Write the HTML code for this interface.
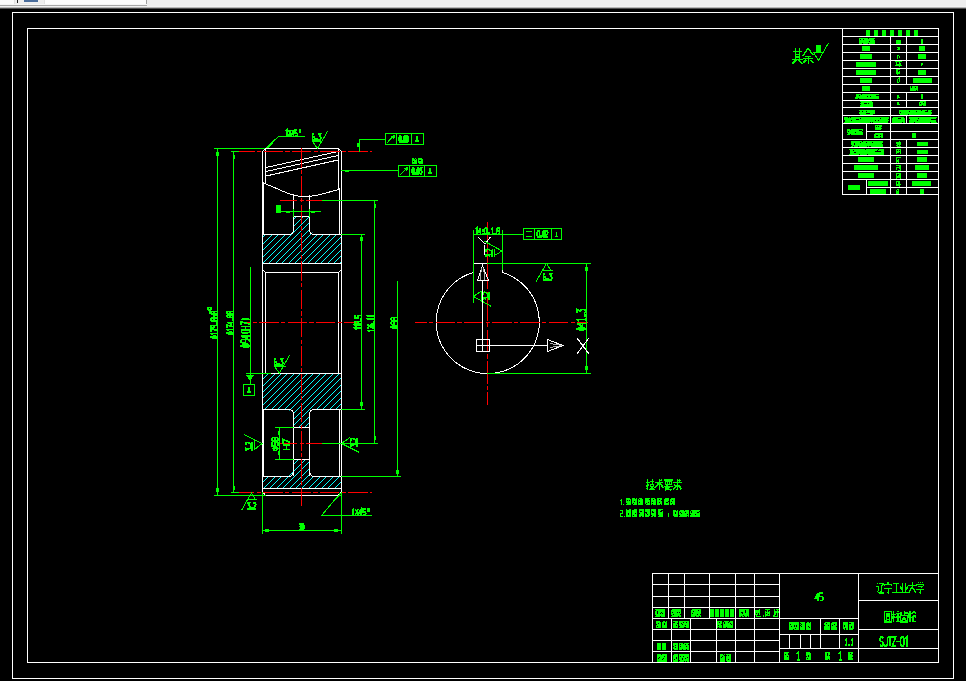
<!DOCTYPE html>
<html><head><meta charset="utf-8"><style>
html,body{margin:0;padding:0;background:#000;width:966px;height:681px;overflow:hidden;font-family:"Liberation Sans",sans-serif}
#top{position:absolute;left:0;top:0;width:966px;height:9px;background:#eeeeee}
svg{position:absolute;left:0;top:0}
</style></head><body>
<div id="top"></div>
<svg width="966" height="681" viewBox="0 0 966 681" shape-rendering="crispEdges" stroke-width="1">
<rect x="0" y="0" width="966" height="6" fill="#eeeeee"/>
<rect x="0" y="0" width="14" height="4" fill="#fcfcfc"/>
<rect x="14" y="0" width="31" height="4" fill="#efefef"/>
<rect x="14" y="0" width="1" height="4" fill="#e2e2e2"/>
<rect x="44" y="0" width="1" height="4" fill="#e2e2e2"/>
<rect x="17" y="0" width="1" height="3" fill="#222"/>
<rect x="24" y="0" width="14" height="2" fill="#4a6d9c"/>
<rect x="45" y="0" width="101" height="4" fill="#fdfdfd"/>
<rect x="146" y="0" width="1" height="5" fill="#a0a0a0"/>
<rect x="0" y="4" width="147" height="1" fill="#f6f6f6"/>
<rect x="0" y="5" width="147" height="1" fill="#a8a8a8"/>
<rect x="0" y="6" width="966" height="1" fill="#f2f2f2"/>
<rect x="0" y="7" width="966" height="1" fill="#b8b8b8"/>
<rect x="0" y="8" width="966" height="1" fill="#505050"/>
<rect x="0" y="9" width="966" height="672" fill="#000"/>

<rect x="12.5" y="12.5" width="941" height="666" fill="none" stroke="#ffffff"/>
<rect x="27.5" y="28.5" width="911" height="634" fill="none" stroke="#ffffff"/>
<clipPath id="hc0"><polygon points="262,234 288,234 293,229 293,216 309,216 309,229 314,234 341,234 341,263 262,263"/></clipPath>
<path d="M262,219v-1h1v-1h1v-1h1v1h-1v1h-1v1h-1zM262,225v-1h1v-1h1v-1h1v-1h1v-1h1v-1h1v-1h1v-1h1v-1h1v1h-1v1h-1v1h-1v1h-1v1h-1v1h-1v1h-1v1h-1v1h-1zM262,232v-1h1v-1h1v-1h1v-1h1v-1h1v-1h1v-1h1v-1h1v-1h1v-1h1v-1h1v-1h1v-1h1v-1h1v-1h1v-1h1v1h-1v1h-1v1h-1v1h-1v1h-1v1h-1v1h-1v1h-1v1h-1v1h-1v1h-1v1h-1v1h-1v1h-1v1h-1v1h-1zM262,238v-1h1v-1h1v-1h1v-1h1v-1h1v-1h1v-1h1v-1h1v-1h1v-1h1v-1h1v-1h1v-1h1v-1h1v-1h1v-1h1v-1h1v-1h1v-1h1v-1h1v-1h1v-1h1v1h-1v1h-1v1h-1v1h-1v1h-1v1h-1v1h-1v1h-1v1h-1v1h-1v1h-1v1h-1v1h-1v1h-1v1h-1v1h-1v1h-1v1h-1v1h-1v1h-1v1h-1v1h-1zM262,245v-1h1v-1h1v-1h1v-1h1v-1h1v-1h1v-1h1v-1h1v-1h1v-1h1v-1h1v-1h1v-1h1v-1h1v-1h1v-1h1v-1h1v-1h1v-1h1v-1h1v-1h1v-1h1v-1h1v-1h1v-1h1v-1h1v-1h1v-1h1v-1h1v1h-1v1h-1v1h-1v1h-1v1h-1v1h-1v1h-1v1h-1v1h-1v1h-1v1h-1v1h-1v1h-1v1h-1v1h-1v1h-1v1h-1v1h-1v1h-1v1h-1v1h-1v1h-1v1h-1v1h-1v1h-1v1h-1v1h-1v1h-1v1h-1zM262,251v-1h1v-1h1v-1h1v-1h1v-1h1v-1h1v-1h1v-1h1v-1h1v-1h1v-1h1v-1h1v-1h1v-1h1v-1h1v-1h1v-1h1v-1h1v-1h1v-1h1v-1h1v-1h1v-1h1v-1h1v-1h1v-1h1v-1h1v-1h1v-1h1v-1h1v-1h1v-1h1v-1h1v-1h1v-1h1v1h-1v1h-1v1h-1v1h-1v1h-1v1h-1v1h-1v1h-1v1h-1v1h-1v1h-1v1h-1v1h-1v1h-1v1h-1v1h-1v1h-1v1h-1v1h-1v1h-1v1h-1v1h-1v1h-1v1h-1v1h-1v1h-1v1h-1v1h-1v1h-1v1h-1v1h-1v1h-1v1h-1v1h-1v1h-1zM262,258v-1h1v-1h1v-1h1v-1h1v-1h1v-1h1v-1h1v-1h1v-1h1v-1h1v-1h1v-1h1v-1h1v-1h1v-1h1v-1h1v-1h1v-1h1v-1h1v-1h1v-1h1v-1h1v-1h1v-1h1v-1h1v-1h1v-1h1v-1h1v-1h1v-1h1v-1h1v-1h1v-1h1v-1h1v-1h1v-1h1v-1h1v-1h1v-1h1v-1h1v-1h1v-1h1v1h-1v1h-1v1h-1v1h-1v1h-1v1h-1v1h-1v1h-1v1h-1v1h-1v1h-1v1h-1v1h-1v1h-1v1h-1v1h-1v1h-1v1h-1v1h-1v1h-1v1h-1v1h-1v1h-1v1h-1v1h-1v1h-1v1h-1v1h-1v1h-1v1h-1v1h-1v1h-1v1h-1v1h-1v1h-1v1h-1v1h-1v1h-1v1h-1v1h-1v1h-1v1h-1zM263,263v-1h1v-1h1v-1h1v-1h1v-1h1v-1h1v-1h1v-1h1v-1h1v-1h1v-1h1v-1h1v-1h1v-1h1v-1h1v-1h1v-1h1v-1h1v-1h1v-1h1v-1h1v-1h1v-1h1v-1h1v-1h1v-1h1v-1h1v-1h1v-1h1v-1h1v-1h1v-1h1v-1h1v-1h1v-1h1v-1h1v-1h1v-1h1v-1h1v-1h1v-1h1v-1h1v-1h1v-1h1v-1h1v-1h1v-1h1v1h-1v1h-1v1h-1v1h-1v1h-1v1h-1v1h-1v1h-1v1h-1v1h-1v1h-1v1h-1v1h-1v1h-1v1h-1v1h-1v1h-1v1h-1v1h-1v1h-1v1h-1v1h-1v1h-1v1h-1v1h-1v1h-1v1h-1v1h-1v1h-1v1h-1v1h-1v1h-1v1h-1v1h-1v1h-1v1h-1v1h-1v1h-1v1h-1v1h-1v1h-1v1h-1v1h-1v1h-1v1h-1v1h-1v1h-1zM269,263v-1h1v-1h1v-1h1v-1h1v-1h1v-1h1v-1h1v-1h1v-1h1v-1h1v-1h1v-1h1v-1h1v-1h1v-1h1v-1h1v-1h1v-1h1v-1h1v-1h1v-1h1v-1h1v-1h1v-1h1v-1h1v-1h1v-1h1v-1h1v-1h1v-1h1v-1h1v-1h1v-1h1v-1h1v-1h1v-1h1v-1h1v-1h1v-1h1v-1h1v-1h1v-1h1v-1h1v-1h1v-1h1v-1h1v-1h1v1h-1v1h-1v1h-1v1h-1v1h-1v1h-1v1h-1v1h-1v1h-1v1h-1v1h-1v1h-1v1h-1v1h-1v1h-1v1h-1v1h-1v1h-1v1h-1v1h-1v1h-1v1h-1v1h-1v1h-1v1h-1v1h-1v1h-1v1h-1v1h-1v1h-1v1h-1v1h-1v1h-1v1h-1v1h-1v1h-1v1h-1v1h-1v1h-1v1h-1v1h-1v1h-1v1h-1v1h-1v1h-1v1h-1v1h-1zM276,263v-1h1v-1h1v-1h1v-1h1v-1h1v-1h1v-1h1v-1h1v-1h1v-1h1v-1h1v-1h1v-1h1v-1h1v-1h1v-1h1v-1h1v-1h1v-1h1v-1h1v-1h1v-1h1v-1h1v-1h1v-1h1v-1h1v-1h1v-1h1v-1h1v-1h1v-1h1v-1h1v-1h1v-1h1v-1h1v-1h1v-1h1v-1h1v-1h1v-1h1v-1h1v-1h1v-1h1v-1h1v-1h1v-1h1v-1h1v1h-1v1h-1v1h-1v1h-1v1h-1v1h-1v1h-1v1h-1v1h-1v1h-1v1h-1v1h-1v1h-1v1h-1v1h-1v1h-1v1h-1v1h-1v1h-1v1h-1v1h-1v1h-1v1h-1v1h-1v1h-1v1h-1v1h-1v1h-1v1h-1v1h-1v1h-1v1h-1v1h-1v1h-1v1h-1v1h-1v1h-1v1h-1v1h-1v1h-1v1h-1v1h-1v1h-1v1h-1v1h-1v1h-1v1h-1zM282,263v-1h1v-1h1v-1h1v-1h1v-1h1v-1h1v-1h1v-1h1v-1h1v-1h1v-1h1v-1h1v-1h1v-1h1v-1h1v-1h1v-1h1v-1h1v-1h1v-1h1v-1h1v-1h1v-1h1v-1h1v-1h1v-1h1v-1h1v-1h1v-1h1v-1h1v-1h1v-1h1v-1h1v-1h1v-1h1v-1h1v-1h1v-1h1v-1h1v-1h1v-1h1v-1h1v-1h1v-1h1v-1h1v-1h1v-1h1v1h-1v1h-1v1h-1v1h-1v1h-1v1h-1v1h-1v1h-1v1h-1v1h-1v1h-1v1h-1v1h-1v1h-1v1h-1v1h-1v1h-1v1h-1v1h-1v1h-1v1h-1v1h-1v1h-1v1h-1v1h-1v1h-1v1h-1v1h-1v1h-1v1h-1v1h-1v1h-1v1h-1v1h-1v1h-1v1h-1v1h-1v1h-1v1h-1v1h-1v1h-1v1h-1v1h-1v1h-1v1h-1v1h-1v1h-1zM289,263v-1h1v-1h1v-1h1v-1h1v-1h1v-1h1v-1h1v-1h1v-1h1v-1h1v-1h1v-1h1v-1h1v-1h1v-1h1v-1h1v-1h1v-1h1v-1h1v-1h1v-1h1v-1h1v-1h1v-1h1v-1h1v-1h1v-1h1v-1h1v-1h1v-1h1v-1h1v-1h1v-1h1v-1h1v-1h1v-1h1v-1h1v-1h1v-1h1v-1h1v-1h1v-1h1v-1h1v-1h1v-1h1v-1h1v-1h1v1h-1v1h-1v1h-1v1h-1v1h-1v1h-1v1h-1v1h-1v1h-1v1h-1v1h-1v1h-1v1h-1v1h-1v1h-1v1h-1v1h-1v1h-1v1h-1v1h-1v1h-1v1h-1v1h-1v1h-1v1h-1v1h-1v1h-1v1h-1v1h-1v1h-1v1h-1v1h-1v1h-1v1h-1v1h-1v1h-1v1h-1v1h-1v1h-1v1h-1v1h-1v1h-1v1h-1v1h-1v1h-1v1h-1v1h-1zM295,263v-1h1v-1h1v-1h1v-1h1v-1h1v-1h1v-1h1v-1h1v-1h1v-1h1v-1h1v-1h1v-1h1v-1h1v-1h1v-1h1v-1h1v-1h1v-1h1v-1h1v-1h1v-1h1v-1h1v-1h1v-1h1v-1h1v-1h1v-1h1v-1h1v-1h1v-1h1v-1h1v-1h1v-1h1v-1h1v-1h1v-1h1v-1h1v-1h1v-1h1v-1h1v-1h1v-1h1v-1h1v-1h1v-1h1v1h-1v1h-1v1h-1v1h-1v1h-1v1h-1v1h-1v1h-1v1h-1v1h-1v1h-1v1h-1v1h-1v1h-1v1h-1v1h-1v1h-1v1h-1v1h-1v1h-1v1h-1v1h-1v1h-1v1h-1v1h-1v1h-1v1h-1v1h-1v1h-1v1h-1v1h-1v1h-1v1h-1v1h-1v1h-1v1h-1v1h-1v1h-1v1h-1v1h-1v1h-1v1h-1v1h-1v1h-1v1h-1v1h-1zM302,263v-1h1v-1h1v-1h1v-1h1v-1h1v-1h1v-1h1v-1h1v-1h1v-1h1v-1h1v-1h1v-1h1v-1h1v-1h1v-1h1v-1h1v-1h1v-1h1v-1h1v-1h1v-1h1v-1h1v-1h1v-1h1v-1h1v-1h1v-1h1v-1h1v-1h1v-1h1v-1h1v-1h1v-1h1v-1h1v-1h1v-1h1v-1h1v-1h1v1h-1v1h-1v1h-1v1h-1v1h-1v1h-1v1h-1v1h-1v1h-1v1h-1v1h-1v1h-1v1h-1v1h-1v1h-1v1h-1v1h-1v1h-1v1h-1v1h-1v1h-1v1h-1v1h-1v1h-1v1h-1v1h-1v1h-1v1h-1v1h-1v1h-1v1h-1v1h-1v1h-1v1h-1v1h-1v1h-1v1h-1v1h-1v1h-1zM308,263v-1h1v-1h1v-1h1v-1h1v-1h1v-1h1v-1h1v-1h1v-1h1v-1h1v-1h1v-1h1v-1h1v-1h1v-1h1v-1h1v-1h1v-1h1v-1h1v-1h1v-1h1v-1h1v-1h1v-1h1v-1h1v-1h1v-1h1v-1h1v-1h1v-1h1v-1h1v-1h1v-1h1v1h-1v1h-1v1h-1v1h-1v1h-1v1h-1v1h-1v1h-1v1h-1v1h-1v1h-1v1h-1v1h-1v1h-1v1h-1v1h-1v1h-1v1h-1v1h-1v1h-1v1h-1v1h-1v1h-1v1h-1v1h-1v1h-1v1h-1v1h-1v1h-1v1h-1v1h-1v1h-1v1h-1zM315,263v-1h1v-1h1v-1h1v-1h1v-1h1v-1h1v-1h1v-1h1v-1h1v-1h1v-1h1v-1h1v-1h1v-1h1v-1h1v-1h1v-1h1v-1h1v-1h1v-1h1v-1h1v-1h1v-1h1v-1h1v-1h1v-1h1v1h-1v1h-1v1h-1v1h-1v1h-1v1h-1v1h-1v1h-1v1h-1v1h-1v1h-1v1h-1v1h-1v1h-1v1h-1v1h-1v1h-1v1h-1v1h-1v1h-1v1h-1v1h-1v1h-1v1h-1v1h-1v1h-1zM321,263v-1h1v-1h1v-1h1v-1h1v-1h1v-1h1v-1h1v-1h1v-1h1v-1h1v-1h1v-1h1v-1h1v-1h1v-1h1v-1h1v-1h1v-1h1v-1h1v-1h1v1h-1v1h-1v1h-1v1h-1v1h-1v1h-1v1h-1v1h-1v1h-1v1h-1v1h-1v1h-1v1h-1v1h-1v1h-1v1h-1v1h-1v1h-1v1h-1v1h-1zM328,263v-1h1v-1h1v-1h1v-1h1v-1h1v-1h1v-1h1v-1h1v-1h1v-1h1v-1h1v-1h1v-1h1v1h-1v1h-1v1h-1v1h-1v1h-1v1h-1v1h-1v1h-1v1h-1v1h-1v1h-1v1h-1v1h-1zM334,263v-1h1v-1h1v-1h1v-1h1v-1h1v-1h1v-1h1v1h-1v1h-1v1h-1v1h-1v1h-1v1h-1v1h-1zM340,263v-1h1v1h-1z" fill="#00ffff" clip-path="url(#hc0)" stroke="none"/>
<clipPath id="hc1"><polygon points="262,373 341,373 341,409 314,409 309,414 309,427 293,427 293,414 288,409 262,409"/></clipPath>
<path d="M262,374v-1h1v1h-1zM262,380v-1h1v-1h1v-1h1v-1h1v-1h1v-1h1v-1h1v1h-1v1h-1v1h-1v1h-1v1h-1v1h-1v1h-1zM262,387v-1h1v-1h1v-1h1v-1h1v-1h1v-1h1v-1h1v-1h1v-1h1v-1h1v-1h1v-1h1v-1h1v-1h1v1h-1v1h-1v1h-1v1h-1v1h-1v1h-1v1h-1v1h-1v1h-1v1h-1v1h-1v1h-1v1h-1v1h-1zM262,393v-1h1v-1h1v-1h1v-1h1v-1h1v-1h1v-1h1v-1h1v-1h1v-1h1v-1h1v-1h1v-1h1v-1h1v-1h1v-1h1v-1h1v-1h1v-1h1v-1h1v1h-1v1h-1v1h-1v1h-1v1h-1v1h-1v1h-1v1h-1v1h-1v1h-1v1h-1v1h-1v1h-1v1h-1v1h-1v1h-1v1h-1v1h-1v1h-1v1h-1zM262,399v-1h1v-1h1v-1h1v-1h1v-1h1v-1h1v-1h1v-1h1v-1h1v-1h1v-1h1v-1h1v-1h1v-1h1v-1h1v-1h1v-1h1v-1h1v-1h1v-1h1v-1h1v-1h1v-1h1v-1h1v-1h1v-1h1v1h-1v1h-1v1h-1v1h-1v1h-1v1h-1v1h-1v1h-1v1h-1v1h-1v1h-1v1h-1v1h-1v1h-1v1h-1v1h-1v1h-1v1h-1v1h-1v1h-1v1h-1v1h-1v1h-1v1h-1v1h-1v1h-1zM262,406v-1h1v-1h1v-1h1v-1h1v-1h1v-1h1v-1h1v-1h1v-1h1v-1h1v-1h1v-1h1v-1h1v-1h1v-1h1v-1h1v-1h1v-1h1v-1h1v-1h1v-1h1v-1h1v-1h1v-1h1v-1h1v-1h1v-1h1v-1h1v-1h1v-1h1v-1h1v-1h1v-1h1v1h-1v1h-1v1h-1v1h-1v1h-1v1h-1v1h-1v1h-1v1h-1v1h-1v1h-1v1h-1v1h-1v1h-1v1h-1v1h-1v1h-1v1h-1v1h-1v1h-1v1h-1v1h-1v1h-1v1h-1v1h-1v1h-1v1h-1v1h-1v1h-1v1h-1v1h-1v1h-1v1h-1zM262,412v-1h1v-1h1v-1h1v-1h1v-1h1v-1h1v-1h1v-1h1v-1h1v-1h1v-1h1v-1h1v-1h1v-1h1v-1h1v-1h1v-1h1v-1h1v-1h1v-1h1v-1h1v-1h1v-1h1v-1h1v-1h1v-1h1v-1h1v-1h1v-1h1v-1h1v-1h1v-1h1v-1h1v-1h1v-1h1v-1h1v-1h1v-1h1v-1h1v1h-1v1h-1v1h-1v1h-1v1h-1v1h-1v1h-1v1h-1v1h-1v1h-1v1h-1v1h-1v1h-1v1h-1v1h-1v1h-1v1h-1v1h-1v1h-1v1h-1v1h-1v1h-1v1h-1v1h-1v1h-1v1h-1v1h-1v1h-1v1h-1v1h-1v1h-1v1h-1v1h-1v1h-1v1h-1v1h-1v1h-1v1h-1v1h-1zM262,419v-1h1v-1h1v-1h1v-1h1v-1h1v-1h1v-1h1v-1h1v-1h1v-1h1v-1h1v-1h1v-1h1v-1h1v-1h1v-1h1v-1h1v-1h1v-1h1v-1h1v-1h1v-1h1v-1h1v-1h1v-1h1v-1h1v-1h1v-1h1v-1h1v-1h1v-1h1v-1h1v-1h1v-1h1v-1h1v-1h1v-1h1v-1h1v-1h1v-1h1v-1h1v-1h1v-1h1v-1h1v-1h1v-1h1v1h-1v1h-1v1h-1v1h-1v1h-1v1h-1v1h-1v1h-1v1h-1v1h-1v1h-1v1h-1v1h-1v1h-1v1h-1v1h-1v1h-1v1h-1v1h-1v1h-1v1h-1v1h-1v1h-1v1h-1v1h-1v1h-1v1h-1v1h-1v1h-1v1h-1v1h-1v1h-1v1h-1v1h-1v1h-1v1h-1v1h-1v1h-1v1h-1v1h-1v1h-1v1h-1v1h-1v1h-1v1h-1v1h-1zM262,425v-1h1v-1h1v-1h1v-1h1v-1h1v-1h1v-1h1v-1h1v-1h1v-1h1v-1h1v-1h1v-1h1v-1h1v-1h1v-1h1v-1h1v-1h1v-1h1v-1h1v-1h1v-1h1v-1h1v-1h1v-1h1v-1h1v-1h1v-1h1v-1h1v-1h1v-1h1v-1h1v-1h1v-1h1v-1h1v-1h1v-1h1v-1h1v-1h1v-1h1v-1h1v-1h1v-1h1v-1h1v-1h1v-1h1v-1h1v-1h1v-1h1v-1h1v-1h1v-1h1v1h-1v1h-1v1h-1v1h-1v1h-1v1h-1v1h-1v1h-1v1h-1v1h-1v1h-1v1h-1v1h-1v1h-1v1h-1v1h-1v1h-1v1h-1v1h-1v1h-1v1h-1v1h-1v1h-1v1h-1v1h-1v1h-1v1h-1v1h-1v1h-1v1h-1v1h-1v1h-1v1h-1v1h-1v1h-1v1h-1v1h-1v1h-1v1h-1v1h-1v1h-1v1h-1v1h-1v1h-1v1h-1v1h-1v1h-1v1h-1v1h-1v1h-1v1h-1v1h-1zM267,427v-1h1v-1h1v-1h1v-1h1v-1h1v-1h1v-1h1v-1h1v-1h1v-1h1v-1h1v-1h1v-1h1v-1h1v-1h1v-1h1v-1h1v-1h1v-1h1v-1h1v-1h1v-1h1v-1h1v-1h1v-1h1v-1h1v-1h1v-1h1v-1h1v-1h1v-1h1v-1h1v-1h1v-1h1v-1h1v-1h1v-1h1v-1h1v-1h1v-1h1v-1h1v-1h1v-1h1v-1h1v-1h1v-1h1v-1h1v-1h1v-1h1v-1h1v-1h1v-1h1v-1h1v-1h1v1h-1v1h-1v1h-1v1h-1v1h-1v1h-1v1h-1v1h-1v1h-1v1h-1v1h-1v1h-1v1h-1v1h-1v1h-1v1h-1v1h-1v1h-1v1h-1v1h-1v1h-1v1h-1v1h-1v1h-1v1h-1v1h-1v1h-1v1h-1v1h-1v1h-1v1h-1v1h-1v1h-1v1h-1v1h-1v1h-1v1h-1v1h-1v1h-1v1h-1v1h-1v1h-1v1h-1v1h-1v1h-1v1h-1v1h-1v1h-1v1h-1v1h-1v1h-1v1h-1v1h-1v1h-1zM273,427v-1h1v-1h1v-1h1v-1h1v-1h1v-1h1v-1h1v-1h1v-1h1v-1h1v-1h1v-1h1v-1h1v-1h1v-1h1v-1h1v-1h1v-1h1v-1h1v-1h1v-1h1v-1h1v-1h1v-1h1v-1h1v-1h1v-1h1v-1h1v-1h1v-1h1v-1h1v-1h1v-1h1v-1h1v-1h1v-1h1v-1h1v-1h1v-1h1v-1h1v-1h1v-1h1v-1h1v-1h1v-1h1v-1h1v-1h1v-1h1v-1h1v-1h1v-1h1v-1h1v-1h1v-1h1v1h-1v1h-1v1h-1v1h-1v1h-1v1h-1v1h-1v1h-1v1h-1v1h-1v1h-1v1h-1v1h-1v1h-1v1h-1v1h-1v1h-1v1h-1v1h-1v1h-1v1h-1v1h-1v1h-1v1h-1v1h-1v1h-1v1h-1v1h-1v1h-1v1h-1v1h-1v1h-1v1h-1v1h-1v1h-1v1h-1v1h-1v1h-1v1h-1v1h-1v1h-1v1h-1v1h-1v1h-1v1h-1v1h-1v1h-1v1h-1v1h-1v1h-1v1h-1v1h-1v1h-1v1h-1zM280,427v-1h1v-1h1v-1h1v-1h1v-1h1v-1h1v-1h1v-1h1v-1h1v-1h1v-1h1v-1h1v-1h1v-1h1v-1h1v-1h1v-1h1v-1h1v-1h1v-1h1v-1h1v-1h1v-1h1v-1h1v-1h1v-1h1v-1h1v-1h1v-1h1v-1h1v-1h1v-1h1v-1h1v-1h1v-1h1v-1h1v-1h1v-1h1v-1h1v-1h1v-1h1v-1h1v-1h1v-1h1v-1h1v-1h1v-1h1v-1h1v-1h1v-1h1v-1h1v-1h1v-1h1v-1h1v1h-1v1h-1v1h-1v1h-1v1h-1v1h-1v1h-1v1h-1v1h-1v1h-1v1h-1v1h-1v1h-1v1h-1v1h-1v1h-1v1h-1v1h-1v1h-1v1h-1v1h-1v1h-1v1h-1v1h-1v1h-1v1h-1v1h-1v1h-1v1h-1v1h-1v1h-1v1h-1v1h-1v1h-1v1h-1v1h-1v1h-1v1h-1v1h-1v1h-1v1h-1v1h-1v1h-1v1h-1v1h-1v1h-1v1h-1v1h-1v1h-1v1h-1v1h-1v1h-1v1h-1v1h-1zM286,427v-1h1v-1h1v-1h1v-1h1v-1h1v-1h1v-1h1v-1h1v-1h1v-1h1v-1h1v-1h1v-1h1v-1h1v-1h1v-1h1v-1h1v-1h1v-1h1v-1h1v-1h1v-1h1v-1h1v-1h1v-1h1v-1h1v-1h1v-1h1v-1h1v-1h1v-1h1v-1h1v-1h1v-1h1v-1h1v-1h1v-1h1v-1h1v-1h1v-1h1v-1h1v-1h1v-1h1v-1h1v-1h1v-1h1v-1h1v-1h1v-1h1v-1h1v-1h1v-1h1v-1h1v-1h1v1h-1v1h-1v1h-1v1h-1v1h-1v1h-1v1h-1v1h-1v1h-1v1h-1v1h-1v1h-1v1h-1v1h-1v1h-1v1h-1v1h-1v1h-1v1h-1v1h-1v1h-1v1h-1v1h-1v1h-1v1h-1v1h-1v1h-1v1h-1v1h-1v1h-1v1h-1v1h-1v1h-1v1h-1v1h-1v1h-1v1h-1v1h-1v1h-1v1h-1v1h-1v1h-1v1h-1v1h-1v1h-1v1h-1v1h-1v1h-1v1h-1v1h-1v1h-1v1h-1v1h-1v1h-1zM292,427v-1h1v-1h1v-1h1v-1h1v-1h1v-1h1v-1h1v-1h1v-1h1v-1h1v-1h1v-1h1v-1h1v-1h1v-1h1v-1h1v-1h1v-1h1v-1h1v-1h1v-1h1v-1h1v-1h1v-1h1v-1h1v-1h1v-1h1v-1h1v-1h1v-1h1v-1h1v-1h1v-1h1v-1h1v-1h1v-1h1v-1h1v-1h1v-1h1v-1h1v-1h1v-1h1v-1h1v-1h1v-1h1v-1h1v-1h1v-1h1v-1h1v1h-1v1h-1v1h-1v1h-1v1h-1v1h-1v1h-1v1h-1v1h-1v1h-1v1h-1v1h-1v1h-1v1h-1v1h-1v1h-1v1h-1v1h-1v1h-1v1h-1v1h-1v1h-1v1h-1v1h-1v1h-1v1h-1v1h-1v1h-1v1h-1v1h-1v1h-1v1h-1v1h-1v1h-1v1h-1v1h-1v1h-1v1h-1v1h-1v1h-1v1h-1v1h-1v1h-1v1h-1v1h-1v1h-1v1h-1v1h-1v1h-1zM299,427v-1h1v-1h1v-1h1v-1h1v-1h1v-1h1v-1h1v-1h1v-1h1v-1h1v-1h1v-1h1v-1h1v-1h1v-1h1v-1h1v-1h1v-1h1v-1h1v-1h1v-1h1v-1h1v-1h1v-1h1v-1h1v-1h1v-1h1v-1h1v-1h1v-1h1v-1h1v-1h1v-1h1v-1h1v-1h1v-1h1v-1h1v-1h1v-1h1v-1h1v-1h1v-1h1v1h-1v1h-1v1h-1v1h-1v1h-1v1h-1v1h-1v1h-1v1h-1v1h-1v1h-1v1h-1v1h-1v1h-1v1h-1v1h-1v1h-1v1h-1v1h-1v1h-1v1h-1v1h-1v1h-1v1h-1v1h-1v1h-1v1h-1v1h-1v1h-1v1h-1v1h-1v1h-1v1h-1v1h-1v1h-1v1h-1v1h-1v1h-1v1h-1v1h-1v1h-1v1h-1zM305,427v-1h1v-1h1v-1h1v-1h1v-1h1v-1h1v-1h1v-1h1v-1h1v-1h1v-1h1v-1h1v-1h1v-1h1v-1h1v-1h1v-1h1v-1h1v-1h1v-1h1v-1h1v-1h1v-1h1v-1h1v-1h1v-1h1v-1h1v-1h1v-1h1v-1h1v-1h1v-1h1v-1h1v-1h1v-1h1v-1h1v1h-1v1h-1v1h-1v1h-1v1h-1v1h-1v1h-1v1h-1v1h-1v1h-1v1h-1v1h-1v1h-1v1h-1v1h-1v1h-1v1h-1v1h-1v1h-1v1h-1v1h-1v1h-1v1h-1v1h-1v1h-1v1h-1v1h-1v1h-1v1h-1v1h-1v1h-1v1h-1v1h-1v1h-1v1h-1v1h-1zM312,427v-1h1v-1h1v-1h1v-1h1v-1h1v-1h1v-1h1v-1h1v-1h1v-1h1v-1h1v-1h1v-1h1v-1h1v-1h1v-1h1v-1h1v-1h1v-1h1v-1h1v-1h1v-1h1v-1h1v-1h1v-1h1v-1h1v-1h1v-1h1v-1h1v1h-1v1h-1v1h-1v1h-1v1h-1v1h-1v1h-1v1h-1v1h-1v1h-1v1h-1v1h-1v1h-1v1h-1v1h-1v1h-1v1h-1v1h-1v1h-1v1h-1v1h-1v1h-1v1h-1v1h-1v1h-1v1h-1v1h-1v1h-1v1h-1zM318,427v-1h1v-1h1v-1h1v-1h1v-1h1v-1h1v-1h1v-1h1v-1h1v-1h1v-1h1v-1h1v-1h1v-1h1v-1h1v-1h1v-1h1v-1h1v-1h1v-1h1v-1h1v-1h1v-1h1v1h-1v1h-1v1h-1v1h-1v1h-1v1h-1v1h-1v1h-1v1h-1v1h-1v1h-1v1h-1v1h-1v1h-1v1h-1v1h-1v1h-1v1h-1v1h-1v1h-1v1h-1v1h-1v1h-1zM325,427v-1h1v-1h1v-1h1v-1h1v-1h1v-1h1v-1h1v-1h1v-1h1v-1h1v-1h1v-1h1v-1h1v-1h1v-1h1v-1h1v1h-1v1h-1v1h-1v1h-1v1h-1v1h-1v1h-1v1h-1v1h-1v1h-1v1h-1v1h-1v1h-1v1h-1v1h-1v1h-1zM331,427v-1h1v-1h1v-1h1v-1h1v-1h1v-1h1v-1h1v-1h1v-1h1v-1h1v1h-1v1h-1v1h-1v1h-1v1h-1v1h-1v1h-1v1h-1v1h-1v1h-1zM338,427v-1h1v-1h1v-1h1v1h-1v1h-1v1h-1z" fill="#00ffff" clip-path="url(#hc1)" stroke="none"/>
<clipPath id="hc2"><polygon points="293,459 309,459 309,471 314,476 341,476 341,488 262,488 262,476 288,476 293,471"/></clipPath>
<path d="M262,464v-1h1v-1h1v-1h1v-1h1v-1h1v1h-1v1h-1v1h-1v1h-1v1h-1zM262,470v-1h1v-1h1v-1h1v-1h1v-1h1v-1h1v-1h1v-1h1v-1h1v-1h1v-1h1v1h-1v1h-1v1h-1v1h-1v1h-1v1h-1v1h-1v1h-1v1h-1v1h-1v1h-1zM262,477v-1h1v-1h1v-1h1v-1h1v-1h1v-1h1v-1h1v-1h1v-1h1v-1h1v-1h1v-1h1v-1h1v-1h1v-1h1v-1h1v-1h1v-1h1v1h-1v1h-1v1h-1v1h-1v1h-1v1h-1v1h-1v1h-1v1h-1v1h-1v1h-1v1h-1v1h-1v1h-1v1h-1v1h-1v1h-1v1h-1zM262,483v-1h1v-1h1v-1h1v-1h1v-1h1v-1h1v-1h1v-1h1v-1h1v-1h1v-1h1v-1h1v-1h1v-1h1v-1h1v-1h1v-1h1v-1h1v-1h1v-1h1v-1h1v-1h1v-1h1v-1h1v1h-1v1h-1v1h-1v1h-1v1h-1v1h-1v1h-1v1h-1v1h-1v1h-1v1h-1v1h-1v1h-1v1h-1v1h-1v1h-1v1h-1v1h-1v1h-1v1h-1v1h-1v1h-1v1h-1v1h-1zM264,488v-1h1v-1h1v-1h1v-1h1v-1h1v-1h1v-1h1v-1h1v-1h1v-1h1v-1h1v-1h1v-1h1v-1h1v-1h1v-1h1v-1h1v-1h1v-1h1v-1h1v-1h1v-1h1v-1h1v-1h1v-1h1v-1h1v-1h1v-1h1v-1h1v1h-1v1h-1v1h-1v1h-1v1h-1v1h-1v1h-1v1h-1v1h-1v1h-1v1h-1v1h-1v1h-1v1h-1v1h-1v1h-1v1h-1v1h-1v1h-1v1h-1v1h-1v1h-1v1h-1v1h-1v1h-1v1h-1v1h-1v1h-1v1h-1zM270,488v-1h1v-1h1v-1h1v-1h1v-1h1v-1h1v-1h1v-1h1v-1h1v-1h1v-1h1v-1h1v-1h1v-1h1v-1h1v-1h1v-1h1v-1h1v-1h1v-1h1v-1h1v-1h1v-1h1v-1h1v-1h1v-1h1v-1h1v-1h1v-1h1v1h-1v1h-1v1h-1v1h-1v1h-1v1h-1v1h-1v1h-1v1h-1v1h-1v1h-1v1h-1v1h-1v1h-1v1h-1v1h-1v1h-1v1h-1v1h-1v1h-1v1h-1v1h-1v1h-1v1h-1v1h-1v1h-1v1h-1v1h-1v1h-1zM277,488v-1h1v-1h1v-1h1v-1h1v-1h1v-1h1v-1h1v-1h1v-1h1v-1h1v-1h1v-1h1v-1h1v-1h1v-1h1v-1h1v-1h1v-1h1v-1h1v-1h1v-1h1v-1h1v-1h1v-1h1v-1h1v-1h1v-1h1v-1h1v-1h1v1h-1v1h-1v1h-1v1h-1v1h-1v1h-1v1h-1v1h-1v1h-1v1h-1v1h-1v1h-1v1h-1v1h-1v1h-1v1h-1v1h-1v1h-1v1h-1v1h-1v1h-1v1h-1v1h-1v1h-1v1h-1v1h-1v1h-1v1h-1v1h-1zM283,488v-1h1v-1h1v-1h1v-1h1v-1h1v-1h1v-1h1v-1h1v-1h1v-1h1v-1h1v-1h1v-1h1v-1h1v-1h1v-1h1v-1h1v-1h1v-1h1v-1h1v-1h1v-1h1v-1h1v-1h1v-1h1v-1h1v-1h1v-1h1v-1h1v1h-1v1h-1v1h-1v1h-1v1h-1v1h-1v1h-1v1h-1v1h-1v1h-1v1h-1v1h-1v1h-1v1h-1v1h-1v1h-1v1h-1v1h-1v1h-1v1h-1v1h-1v1h-1v1h-1v1h-1v1h-1v1h-1v1h-1v1h-1v1h-1zM290,488v-1h1v-1h1v-1h1v-1h1v-1h1v-1h1v-1h1v-1h1v-1h1v-1h1v-1h1v-1h1v-1h1v-1h1v-1h1v-1h1v-1h1v-1h1v-1h1v-1h1v-1h1v-1h1v-1h1v-1h1v-1h1v-1h1v-1h1v-1h1v-1h1v1h-1v1h-1v1h-1v1h-1v1h-1v1h-1v1h-1v1h-1v1h-1v1h-1v1h-1v1h-1v1h-1v1h-1v1h-1v1h-1v1h-1v1h-1v1h-1v1h-1v1h-1v1h-1v1h-1v1h-1v1h-1v1h-1v1h-1v1h-1v1h-1zM296,488v-1h1v-1h1v-1h1v-1h1v-1h1v-1h1v-1h1v-1h1v-1h1v-1h1v-1h1v-1h1v-1h1v-1h1v-1h1v-1h1v-1h1v-1h1v-1h1v-1h1v-1h1v-1h1v-1h1v-1h1v-1h1v-1h1v-1h1v-1h1v-1h1v1h-1v1h-1v1h-1v1h-1v1h-1v1h-1v1h-1v1h-1v1h-1v1h-1v1h-1v1h-1v1h-1v1h-1v1h-1v1h-1v1h-1v1h-1v1h-1v1h-1v1h-1v1h-1v1h-1v1h-1v1h-1v1h-1v1h-1v1h-1v1h-1zM302,488v-1h1v-1h1v-1h1v-1h1v-1h1v-1h1v-1h1v-1h1v-1h1v-1h1v-1h1v-1h1v-1h1v-1h1v-1h1v-1h1v-1h1v-1h1v-1h1v-1h1v-1h1v-1h1v-1h1v-1h1v-1h1v-1h1v-1h1v-1h1v-1h1v1h-1v1h-1v1h-1v1h-1v1h-1v1h-1v1h-1v1h-1v1h-1v1h-1v1h-1v1h-1v1h-1v1h-1v1h-1v1h-1v1h-1v1h-1v1h-1v1h-1v1h-1v1h-1v1h-1v1h-1v1h-1v1h-1v1h-1v1h-1v1h-1zM309,488v-1h1v-1h1v-1h1v-1h1v-1h1v-1h1v-1h1v-1h1v-1h1v-1h1v-1h1v-1h1v-1h1v-1h1v-1h1v-1h1v-1h1v-1h1v-1h1v-1h1v-1h1v-1h1v-1h1v-1h1v-1h1v-1h1v-1h1v-1h1v-1h1v1h-1v1h-1v1h-1v1h-1v1h-1v1h-1v1h-1v1h-1v1h-1v1h-1v1h-1v1h-1v1h-1v1h-1v1h-1v1h-1v1h-1v1h-1v1h-1v1h-1v1h-1v1h-1v1h-1v1h-1v1h-1v1h-1v1h-1v1h-1v1h-1zM315,488v-1h1v-1h1v-1h1v-1h1v-1h1v-1h1v-1h1v-1h1v-1h1v-1h1v-1h1v-1h1v-1h1v-1h1v-1h1v-1h1v-1h1v-1h1v-1h1v-1h1v-1h1v-1h1v-1h1v-1h1v-1h1v-1h1v1h-1v1h-1v1h-1v1h-1v1h-1v1h-1v1h-1v1h-1v1h-1v1h-1v1h-1v1h-1v1h-1v1h-1v1h-1v1h-1v1h-1v1h-1v1h-1v1h-1v1h-1v1h-1v1h-1v1h-1v1h-1v1h-1zM322,488v-1h1v-1h1v-1h1v-1h1v-1h1v-1h1v-1h1v-1h1v-1h1v-1h1v-1h1v-1h1v-1h1v-1h1v-1h1v-1h1v-1h1v-1h1v-1h1v1h-1v1h-1v1h-1v1h-1v1h-1v1h-1v1h-1v1h-1v1h-1v1h-1v1h-1v1h-1v1h-1v1h-1v1h-1v1h-1v1h-1v1h-1v1h-1zM328,488v-1h1v-1h1v-1h1v-1h1v-1h1v-1h1v-1h1v-1h1v-1h1v-1h1v-1h1v-1h1v-1h1v1h-1v1h-1v1h-1v1h-1v1h-1v1h-1v1h-1v1h-1v1h-1v1h-1v1h-1v1h-1v1h-1zM335,488v-1h1v-1h1v-1h1v-1h1v-1h1v-1h1v1h-1v1h-1v1h-1v1h-1v1h-1v1h-1z" fill="#00ffff" clip-path="url(#hc2)" stroke="none"/>
<line x1="262.5" y1="151" x2="262.5" y2="493" stroke="#ffffff"/>
<line x1="341.5" y1="151" x2="341.5" y2="493" stroke="#ffffff"/>
<line x1="265" y1="148.5" x2="339" y2="148.5" stroke="#ffffff"/>
<line x1="262.5" y1="151.5" x2="265.5" y2="148.5" stroke="#ffffff"/>
<line x1="338.5" y1="148.5" x2="341.5" y2="151.5" stroke="#ffffff"/>
<line x1="265.5" y1="148" x2="265.5" y2="183" stroke="#ffffff"/>
<line x1="338.5" y1="148" x2="338.5" y2="190" stroke="#ffffff"/>
<line x1="263.5" y1="183" x2="263.5" y2="235" stroke="#ffffff"/>
<line x1="339.5" y1="190" x2="339.5" y2="235" stroke="#ffffff"/>
<line x1="266" y1="167.5" x2="338" y2="151.5" stroke="#ffffff"/>
<line x1="266" y1="171.5" x2="338" y2="155.5" stroke="#ffffff"/>
<line x1="266" y1="176" x2="338" y2="160" stroke="#ffffff"/>
<path d="M262.5,182.5 L264.5,183.5 L272,186.5 L280,190 L287,193 L293.5,195 L300,196.5 L309.5,196.5 L318,195 L326,193 L333,191 L338.5,189.5 L340.5,188.5" stroke="#ffffff" fill="none"/>
<line x1="293.5" y1="195" x2="293.5" y2="230" stroke="#ffffff"/>
<line x1="309.5" y1="195" x2="309.5" y2="230" stroke="#ffffff"/>
<path d="M293.5,229.5 Q293.5,234.5 288.5,234.5 L262,234.5" stroke="#ffffff" fill="none"/>
<path d="M309.5,229.5 Q309.5,234.5 314.5,234.5 L341,234.5" stroke="#ffffff" fill="none"/>
<line x1="293" y1="216.5" x2="310" y2="216.5" stroke="#ffffff"/>
<line x1="262" y1="263.5" x2="342" y2="263.5" stroke="#ffffff"/>
<path d="M262.5,269.5 L265.5,272.5 L338.5,272.5 L341.5,269.5" stroke="#ffffff" fill="none"/>
<line x1="265.5" y1="272" x2="265.5" y2="374" stroke="#ffffff"/>
<line x1="338.5" y1="272" x2="338.5" y2="374" stroke="#ffffff"/>
<line x1="262" y1="373.5" x2="342" y2="373.5" stroke="#ffffff"/>
<path d="M262,409.5 L288.5,409.5 Q293.5,409.5 293.5,414.5 L293.5,476" stroke="#ffffff" fill="none"/>
<path d="M341,409.5 L314.5,409.5 Q309.5,409.5 309.5,414.5 L309.5,476" stroke="#ffffff" fill="none"/>
<line x1="293" y1="427.5" x2="310" y2="427.5" stroke="#ffffff"/>
<line x1="293" y1="459.5" x2="310" y2="459.5" stroke="#ffffff"/>
<path d="M293.5,470.5 Q293.5,476.5 288.5,476.5 L262,476.5" stroke="#ffffff" fill="none"/>
<path d="M309.5,470.5 Q309.5,476.5 314.5,476.5 L341,476.5" stroke="#ffffff" fill="none"/>
<line x1="263.5" y1="409" x2="263.5" y2="477" stroke="#ffffff"/>
<line x1="339.5" y1="409" x2="339.5" y2="477" stroke="#ffffff"/>
<line x1="262" y1="488.5" x2="342" y2="488.5" stroke="#ffffff"/>
<path d="M262.5,491.5 L265.5,495.5 L337.5,495.5 L341.5,491.5" stroke="#ffffff" fill="none"/>
<line x1="301.5" y1="148" x2="301.5" y2="506" stroke="#ff0000" stroke-dasharray="19.5 2.3 4.2 2.3" stroke-dashoffset="0.00"/>
<line x1="238" y1="151.5" x2="372" y2="151.5" stroke="#ff0000" stroke-dasharray="19.5 2.3 4.2 2.3" stroke-dashoffset="2.80"/>
<line x1="280" y1="200.5" x2="322" y2="200.5" stroke="#ff0000" stroke-dasharray="19.5 2.3 4.2 2.3" stroke-dashoffset="2.10"/>
<line x1="241" y1="322.5" x2="357" y2="322.5" stroke="#ff0000" stroke-dasharray="19.5 2.3 4.2 2.3" stroke-dashoffset="10.10"/>
<line x1="280" y1="443.5" x2="322" y2="443.5" stroke="#ff0000" stroke-dasharray="19.5 2.3 4.2 2.3" stroke-dashoffset="2.10"/>
<line x1="238" y1="492.5" x2="372" y2="492.5" stroke="#ff0000" stroke-dasharray="19.5 2.3 4.2 2.3" stroke-dashoffset="3.10"/>
<line x1="214" y1="148.5" x2="265" y2="148.5" stroke="#00ff00"/>
<line x1="217.5" y1="148" x2="217.5" y2="496" stroke="#00ff00"/>
<line x1="231" y1="151.5" x2="239" y2="151.5" stroke="#00ff00"/>
<line x1="233.5" y1="151" x2="233.5" y2="493" stroke="#00ff00"/>
<line x1="250.5" y1="267" x2="250.5" y2="374" stroke="#00ff00"/>
<line x1="246" y1="373.5" x2="271" y2="373.5" stroke="#00ff00"/>
<line x1="214" y1="495.5" x2="266" y2="495.5" stroke="#00ff00"/>
<line x1="231" y1="492.5" x2="239" y2="492.5" stroke="#00ff00"/>
<rect x="216" y="152" width="3" height="4" fill="#00ff00"/>
<rect x="216" y="488" width="3" height="4" fill="#00ff00"/>
<rect x="234" y="155" width="1" height="4" fill="#00ff00"/>
<rect x="234" y="486" width="1" height="4" fill="#00ff00"/>
<line x1="322" y1="200.5" x2="378" y2="200.5" stroke="#00ff00"/>
<line x1="374.5" y1="200" x2="374.5" y2="444" stroke="#00ff00"/>
<line x1="322" y1="443.5" x2="378" y2="443.5" stroke="#00ff00"/>
<line x1="341" y1="234.5" x2="365" y2="234.5" stroke="#00ff00"/>
<line x1="361.5" y1="234" x2="361.5" y2="410" stroke="#00ff00"/>
<line x1="341" y1="409.5" x2="365" y2="409.5" stroke="#00ff00"/>
<line x1="397.5" y1="281" x2="397.5" y2="477" stroke="#00ff00"/>
<line x1="341" y1="476.5" x2="401" y2="476.5" stroke="#00ff00"/>
<rect x="360" y="237" width="3" height="4" fill="#00ff00"/>
<rect x="360" y="402" width="3" height="4" fill="#00ff00"/>
<rect x="375" y="204" width="1" height="4" fill="#00ff00"/>
<rect x="375" y="436" width="1" height="4" fill="#00ff00"/>
<rect x="396" y="470" width="3" height="4" fill="#00ff00"/>
<line x1="262.5" y1="492" x2="262.5" y2="534" stroke="#00ff00"/>
<line x1="341.5" y1="492" x2="341.5" y2="534" stroke="#00ff00"/>
<line x1="262" y1="530.5" x2="342" y2="530.5" stroke="#00ff00"/>
<rect x="265" y="529" width="4" height="3" fill="#00ff00"/>
<rect x="334" y="529" width="4" height="3" fill="#00ff00"/>
<path transform="translate(299,524)" d="M0.25,0.00H2.25L1.25,2.50H1.75L2.25,3.50V5.00L1.75,6.00H0.75L0.25,5.00M3.25,0.00H4.25L4.75,1.00V5.00L4.25,6.00H3.25L2.75,5.00V1.00Z" stroke="#00ff00" fill="none" stroke-width="1.6"/>
<line x1="281" y1="211.5" x2="321" y2="211.5" stroke="#00ff00"/>
<rect x="276" y="205" width="5" height="8" fill="#00ff00"/>
<line x1="293.5" y1="209" x2="293.5" y2="217" stroke="#00ff00"/>
<line x1="309.5" y1="209" x2="309.5" y2="217" stroke="#00ff00"/>
<rect x="286" y="211" width="4" height="2" fill="#00ff00"/>
<rect x="311" y="211" width="4" height="2" fill="#00ff00"/>
<line x1="275" y1="427.5" x2="294" y2="427.5" stroke="#00ff00"/>
<line x1="275" y1="459.5" x2="294" y2="459.5" stroke="#00ff00"/>
<line x1="279.5" y1="427" x2="279.5" y2="460" stroke="#00ff00"/>
<rect x="278" y="431" width="2" height="4" fill="#00ff00"/>
<rect x="278" y="451" width="2" height="4" fill="#00ff00"/>
<line x1="266" y1="148" x2="278.5" y2="136.5" stroke="#00ff00"/>
<line x1="278" y1="136.5" x2="305" y2="136.5" stroke="#00ff00"/>
<polygon points="266,148 271.5,141.5 273,143 267.5,148.5" fill="#00ff00"/>
<line x1="340.5" y1="493" x2="321.5" y2="515.5" stroke="#00ff00"/>
<polygon points="339.5,494.5 333,500 334,501.5 340.5,495.5" fill="#00ff00"/>
<line x1="321" y1="515.5" x2="372" y2="515.5" stroke="#00ff00"/>
<path transform="translate(285,130)" d="M0.64,1.50L1.92,0.00V6.00M0.96,6.00H2.88M3.52,0.00L6.08,6.00M6.08,0.00L3.52,6.00M8.64,6.00V0.00L6.72,4.00H9.28M12.48,0.00H9.92V3.00H11.84L12.48,4.00V5.00L11.84,6.00H9.92M14.40,0.00H15.68V2.00H14.40Z" stroke="#00ff00" fill="none" stroke-width="1.6"/>
<path transform="translate(351,509)" d="M0.76,1.50L2.28,0.00V6.00M1.14,6.00H3.42M4.18,0.00L7.22,6.00M7.22,0.00L4.18,6.00M10.26,6.00V0.00L7.98,4.00H11.02M14.82,0.00H11.78V3.00H14.06L14.82,4.00V5.00L14.06,6.00H11.78M17.10,0.00H18.62V2.00H17.10Z" stroke="#00ff00" fill="none" stroke-width="1.6"/>
<path d="M312.5,141.5 L317.5,148.5 L327.5,131.5" stroke="#00ff00" fill="none"/>
<line x1="312" y1="141.5" x2="322" y2="141.5" stroke="#00ff00"/>
<path transform="translate(312,134)" d="M2.10,0.00H0.90L0.30,1.00V5.00L0.90,6.00H2.10L2.70,5.00V4.00L2.10,3.00H0.30M3.90,5.20H5.10V6.00H3.90ZM6.30,0.00H8.70L7.50,2.50H8.10L8.70,3.50V5.00L8.10,6.00H6.90L6.30,5.00" stroke="#00ff00" fill="none" stroke-width="1.6"/>
<path d="M274.5,366.5 L279.5,373 L289.5,355.5" stroke="#00ff00" fill="none"/>
<line x1="274" y1="366.5" x2="286" y2="366.5" stroke="#00ff00"/>
<path transform="translate(274,359)" d="M2.10,0.00H0.90L0.30,1.00V5.00L0.90,6.00H2.10L2.70,5.00V4.00L2.10,3.00H0.30M3.90,5.20H5.10V6.00H3.90ZM6.30,0.00H8.70L7.50,2.50H8.10L8.70,3.50V5.00L8.10,6.00H6.90L6.30,5.00" stroke="#00ff00" fill="none" stroke-width="1.6"/>
<path d="M241.5,510.5 L247.5,499.5 L251.5,493 L255.5,499.5" stroke="#00ff00" fill="none"/>
<line x1="247" y1="499.5" x2="257" y2="499.5" stroke="#00ff00"/>
<path transform="translate(247,503)" d="M0.30,0.00H2.70L1.50,2.50H2.10L2.70,3.50V5.00L2.10,6.00H0.90L0.30,5.00M3.90,5.20H5.10V6.00H3.90ZM6.30,1.00L6.90,0.00H8.10L8.70,1.00V2.00L6.30,6.00H8.70" stroke="#00ff00" fill="none" stroke-width="1.6"/>
<path d="M244,434.5 L262,443.5 L254.5,449.5" stroke="#00ff00" fill="none"/>
<line x1="254.5" y1="440" x2="254.5" y2="450" stroke="#00ff00"/>
<path transform="translate(246,451) rotate(-90)" d="M0.30,0.00H2.70L1.50,2.50H2.10L2.70,3.50V5.00L2.10,6.00H0.90L0.30,5.00M3.90,5.20H5.10V6.00H3.90ZM6.30,1.00L6.90,0.00H8.10L8.70,1.00V2.00L6.30,6.00H8.70" stroke="#00ff00" fill="none" stroke-width="1.6"/>
<path d="M350,437.5 L341.5,443.5 L359.5,452.5" stroke="#00ff00" fill="none"/>
<line x1="350.5" y1="438" x2="350.5" y2="448" stroke="#00ff00"/>
<path transform="translate(351,447) rotate(-90)" d="M0.30,0.00H2.70L1.50,2.50H2.10L2.70,3.50V5.00L2.10,6.00H0.90L0.30,5.00M3.90,5.20H5.10V6.00H3.90ZM6.30,1.00L6.90,0.00H8.10L8.70,1.00V2.00L6.30,6.00H8.70" stroke="#00ff00" fill="none" stroke-width="1.6"/>
<path transform="translate(211,339) rotate(-90)" d="M1.75,-0.54V7.04M1.05,1.62H2.45L3.15,2.71V4.33L2.45,5.42H1.05L0.35,4.33V2.71ZM4.20,1.62L5.60,0.00V6.50M4.55,6.50H6.65M7.35,0.00H10.15L8.40,6.50M13.65,3.25H11.55L10.85,2.17V1.08L11.55,0.00H12.95L13.65,1.08V5.42L12.95,6.50H11.55M15.05,5.63H16.45V6.50H15.05ZM18.55,0.00H19.95L20.65,1.08V2.17L19.95,3.25H18.55L17.85,4.33V5.42L18.55,6.50H19.95L20.65,5.42V4.33L19.95,3.25H18.55L17.85,2.17V1.08ZM21.35,0.00V6.50M21.35,3.25L22.05,2.71H23.45L24.15,3.25V6.50M25.55,0.00H26.95L27.65,1.08V2.17L26.95,3.25H25.55L24.85,4.33V5.42L25.55,6.50H26.95L27.65,5.42V4.33L26.95,3.25H25.55L24.85,2.17V1.08Z" stroke="#00ff00" fill="none" stroke-width="1.6"/>
<path transform="translate(208,314) rotate(-90)" d="M0.35,1.50H3.15M4.55,0.00H5.95L6.65,0.50V2.50L5.95,3.00H4.55L3.85,2.50V0.50Z" stroke="#00ff00" fill="none" stroke-width="1.6"/>
<path transform="translate(227,335) rotate(-90)" d="M1.71,-0.54V7.04M1.03,1.62H2.40L3.09,2.71V4.33L2.40,5.42H1.03L0.34,4.33V2.71ZM4.11,1.62L5.49,0.00V6.50M4.46,6.50H6.51M7.20,0.00H9.94L8.23,6.50M12.69,6.50V0.00L10.63,4.33H13.37M14.74,5.63H16.11V6.50H14.74ZM18.17,0.00H19.54L20.23,1.08V2.17L19.54,3.25H18.17L17.49,4.33V5.42L18.17,6.50H19.54L20.23,5.42V4.33L19.54,3.25H18.17L17.49,2.17V1.08ZM21.60,0.00H22.97L23.66,1.08V2.17L22.97,3.25H21.60L20.91,4.33V5.42L21.60,6.50H22.97L23.66,5.42V4.33L22.97,3.25H21.60L20.91,2.17V1.08Z" stroke="#00ff00" fill="none" stroke-width="1.6"/>
<path transform="translate(241,348) rotate(-90)" d="M2.21,-0.75V9.75M1.33,2.25H3.10L3.99,3.75V6.00L3.10,7.50H1.33L0.44,6.00V3.75ZM8.41,4.50H5.76L4.87,3.00V1.50L5.76,0.00H7.53L8.41,1.50V7.50L7.53,9.00H5.76M11.96,9.00V0.00L9.30,6.00H12.84M15.94,0.00L15.06,2.25V6.75L15.94,9.00M18.16,0.00V9.00M21.70,0.00V9.00M18.16,4.50H21.70M22.59,0.00H26.13L23.91,9.00M28.34,0.00L29.23,2.25V6.75L28.34,9.00" stroke="#00ff00" fill="none" stroke-width="1.6"/>
<path transform="translate(355,330) rotate(-90)" d="M0.60,1.62L1.80,0.00V6.50M0.90,6.50H2.70M3.60,1.62L4.80,0.00V6.50M3.90,6.50H5.70M6.90,0.00H8.10L8.70,1.08V2.17L8.10,3.25H6.90L6.30,4.33V5.42L6.90,6.50H8.10L8.70,5.42V4.33L8.10,3.25H6.90L6.30,2.17V1.08ZM9.90,5.63H11.10V6.50H9.90ZM14.70,0.00H12.30V3.25H14.10L14.70,4.33V5.42L14.10,6.50H12.30" stroke="#00ff00" fill="none" stroke-width="1.6"/>
<path transform="translate(368,332) rotate(-90)" d="M0.57,1.62L1.70,0.00V6.50M0.85,6.50H2.55M3.12,1.08L3.68,0.00H4.82L5.38,1.08V2.17L3.12,6.50H5.38M7.65,0.00H6.52L5.95,1.08V5.42L6.52,6.50H7.65L8.22,5.42V4.33L7.65,3.25H5.95M9.35,5.63H10.48V6.50H9.35ZM11.90,1.62L13.03,0.00V6.50M12.18,6.50H13.88M14.73,1.62L15.87,0.00V6.50M15.02,6.50H16.72" stroke="#00ff00" fill="none" stroke-width="1.6"/>
<path transform="translate(391,329) rotate(-90)" d="M2.00,-0.54V7.04M1.20,1.62H2.80L3.60,2.71V4.33L2.80,5.42H1.20L0.40,4.33V2.71ZM7.60,3.25H5.20L4.40,2.17V1.08L5.20,0.00H6.80L7.60,1.08V5.42L6.80,6.50H5.20M9.20,0.00H10.80L11.60,1.08V2.17L10.80,3.25H9.20L8.40,4.33V5.42L9.20,6.50H10.80L11.60,5.42V4.33L10.80,3.25H9.20L8.40,2.17V1.08Z" stroke="#00ff00" fill="none" stroke-width="1.6"/>
<path transform="translate(272,451) rotate(-90)" d="M2.33,-0.50V6.50M1.40,1.50H3.27L4.20,2.50V4.00L3.27,5.00H1.40L0.47,4.00V2.50ZM8.87,0.00H5.13V3.00H7.93L8.87,4.00V5.00L7.93,6.00H5.13M10.73,0.00H12.60L13.53,1.00V2.00L12.60,3.00H10.73L9.80,4.00V5.00L10.73,6.00H12.60L13.53,5.00V4.00L12.60,3.00H10.73L9.80,2.00V1.00Z" stroke="#00ff00" fill="none" stroke-width="1.6"/>
<path transform="translate(283,450) rotate(-90)" d="M0.55,0.00V7.00M4.95,0.00V7.00M0.55,3.50H4.95M6.05,0.00H10.45L7.70,7.00" stroke="#00ff00" fill="none" stroke-width="1.6"/>
<polygon points="246,375 254,375 250,381" fill="#00ff00"/>
<line x1="250.5" y1="373" x2="250.5" y2="385" stroke="#00ff00"/>
<rect x="243.5" y="384.5" width="11" height="11" fill="none" stroke="#00ff00"/>
<rect x="248" y="387" width="2" height="6" fill="#00ff00"/>
<rect x="247" y="391" width="4" height="2" fill="#00ff00"/>
<line x1="359.5" y1="139" x2="359.5" y2="152" stroke="#00ff00"/>
<line x1="359" y1="139.5" x2="386" y2="139.5" stroke="#00ff00"/>
<rect x="385.5" y="133.5" width="38" height="11" fill="none" stroke="#00ff00"/>
<line x1="396.5" y1="133" x2="396.5" y2="145" stroke="#00ff00"/>
<line x1="411.5" y1="133" x2="411.5" y2="145" stroke="#00ff00"/>
<line x1="387" y1="143" x2="394" y2="135" stroke="#00ff00"/>
<polygon points="395.5,134 391,136.5 394,139.5" fill="#00ff00"/>
<path transform="translate(399,136)" d="M0.71,0.00H1.66L2.14,1.00V5.00L1.66,6.00H0.71L0.24,5.00V1.00ZM3.09,5.20H4.04V6.00H3.09ZM5.46,0.00H6.41L6.89,1.00V5.00L6.41,6.00H5.46L4.99,5.00V1.00ZM7.84,0.00H8.79L9.26,1.00V2.00L8.79,3.00H7.84L7.36,4.00V5.00L7.84,6.00H8.79L9.26,5.00V4.00L8.79,3.00H7.84L7.36,2.00V1.00Z" stroke="#00ff00" fill="none" stroke-width="1.6"/>
<rect x="416" y="136" width="2" height="5" fill="#00ff00"/>
<rect x="415" y="140" width="4" height="2" fill="#00ff00"/>
<rect x="357" y="143" width="2" height="4" fill="#00ff00"/>
<line x1="341" y1="170.5" x2="399" y2="170.5" stroke="#00ff00"/>
<rect x="345" y="170" width="4" height="2" fill="#00ff00"/>
<rect x="398.5" y="165.5" width="38" height="11" fill="none" stroke="#00ff00"/>
<line x1="409.5" y1="165" x2="409.5" y2="177" stroke="#00ff00"/>
<line x1="424.5" y1="165" x2="424.5" y2="177" stroke="#00ff00"/>
<line x1="400" y1="175" x2="407" y2="168" stroke="#00ff00"/>
<polygon points="408.5,166 404,168.5 407,171.5" fill="#00ff00"/>
<path transform="translate(412,168)" d="M0.75,0.00H1.75L2.25,1.00V5.00L1.75,6.00H0.75L0.25,5.00V1.00ZM3.25,5.20H4.25V6.00H3.25ZM5.75,0.00H6.75L7.25,1.00V5.00L6.75,6.00H5.75L5.25,5.00V1.00ZM7.75,0.00H9.75L8.75,2.50H9.25L9.75,3.50V5.00L9.25,6.00H8.25L7.75,5.00" stroke="#00ff00" fill="none" stroke-width="1.6"/>
<rect x="429" y="168" width="2" height="5" fill="#00ff00"/>
<rect x="428" y="172" width="4" height="2" fill="#00ff00"/>
<rect x="412" y="158" width="5" height="6" fill="#00ff00"/>
<path d="M413,161.5h1M415.5,159v1M414.5,158v1M416.5,158v1" stroke="#000" fill="none"/>
<rect x="418" y="158" width="5" height="6" fill="#00ff00"/>
<path d="M419,160.5h1M420.5,160v1M418.5,164v-1M423,158.5h-1" stroke="#000" fill="none"/>
<path d="M502.5,272.55 A51.6,51.6 0 1 1 473.5,272.41" stroke="#ffffff" fill="none"/>
<line x1="473.5" y1="264" x2="473.5" y2="273" stroke="#ffffff"/>
<line x1="502.5" y1="269" x2="502.5" y2="273" stroke="#ffffff"/>
<line x1="474" y1="263.5" x2="488" y2="263.5" stroke="#ffffff"/>
<line x1="415" y1="322.5" x2="588" y2="322.5" stroke="#ff0000" stroke-dasharray="19.5 2.3 4.2 2.3" stroke-dashoffset="7.80"/>
<line x1="487.5" y1="222" x2="487.5" y2="405" stroke="#ff0000" stroke-dasharray="22.5 2.2 4.5 2.2" stroke-dashoffset="18.00"/>
<line x1="487.5" y1="222" x2="487.5" y2="267" stroke="#ff0000"/>
<line x1="487" y1="263.5" x2="591" y2="263.5" stroke="#00ff00"/>
<line x1="487" y1="373.5" x2="591" y2="373.5" stroke="#00ff00"/>
<line x1="586.5" y1="264" x2="586.5" y2="374" stroke="#00ff00"/>
<rect x="585" y="267" width="3" height="4" fill="#00ff00"/>
<rect x="585" y="366" width="3" height="4" fill="#00ff00"/>
<path transform="translate(577,331) rotate(-90)" d="M2.20,-0.71V9.21M1.32,2.12H3.08L3.96,3.54V5.67L3.08,7.08H1.32L0.44,5.67V3.54ZM7.48,8.50V0.00L4.84,5.67H8.36M9.68,2.12L11.44,0.00V8.50M10.12,8.50H12.76M14.52,7.37H16.28V8.50H14.52ZM18.04,0.00H21.56L19.80,3.54H20.68L21.56,4.96V7.08L20.68,8.50H18.92L18.04,7.08" stroke="#00ff00" fill="none" stroke-width="1.6"/>
<line x1="473.5" y1="230" x2="473.5" y2="303" stroke="#00ff00"/>
<line x1="502.5" y1="230" x2="502.5" y2="270" stroke="#00ff00"/>
<line x1="473" y1="234.5" x2="524" y2="234.5" stroke="#00ff00"/>
<path transform="translate(475,228)" d="M0.62,1.50L1.88,0.00V6.00M0.94,6.00H2.81M5.31,6.00V0.00L3.44,4.00H5.94M7.81,0.50V3.50M6.56,2.00H9.06M6.56,5.50H9.06M10.31,0.00H11.56L12.19,1.00V5.00L11.56,6.00H10.31L9.69,5.00V1.00ZM13.44,5.20H14.69V6.00H13.44ZM16.25,1.50L17.50,0.00V6.00M16.56,6.00H18.44M21.56,0.00V5.00L20.94,6.00H19.69L19.06,5.00M24.69,3.00H22.81L22.19,2.00V1.00L22.81,0.00H24.06L24.69,1.00V5.00L24.06,6.00H22.81" stroke="#00ff00" fill="none" stroke-width="1.6"/>
<rect x="523.5" y="228.5" width="38" height="11" fill="none" stroke="#00ff00"/>
<line x1="534.5" y1="228" x2="534.5" y2="240" stroke="#00ff00"/>
<line x1="551.5" y1="228" x2="551.5" y2="240" stroke="#00ff00"/>
<line x1="526" y1="231.5" x2="532" y2="231.5" stroke="#00ff00"/>
<line x1="526" y1="236.5" x2="532" y2="236.5" stroke="#00ff00"/>
<path transform="translate(537,231)" d="M0.82,0.00H1.93L2.48,1.00V5.00L1.93,6.00H0.82L0.27,5.00V1.00ZM3.58,5.20H4.67V6.00H3.58ZM6.33,0.00H7.43L7.98,1.00V5.00L7.43,6.00H6.33L5.78,5.00V1.00ZM8.53,1.00L9.08,0.00H10.18L10.73,1.00V2.00L8.53,6.00H10.73" stroke="#00ff00" fill="none" stroke-width="1.6"/>
<rect x="556" y="232" width="1" height="5" fill="#00ff00"/>
<rect x="555" y="236" width="3" height="1" fill="#00ff00"/>
<path d="M536,281.5 L542.5,270.5 L546.5,263.5 L551,270.5" stroke="#00ff00" fill="none"/>
<line x1="542" y1="270.5" x2="553" y2="270.5" stroke="#00ff00"/>
<path transform="translate(543,274)" d="M2.10,0.00H0.90L0.30,1.00V5.00L0.90,6.00H2.10L2.70,5.00V4.00L2.10,3.00H0.30M3.90,5.20H5.10V6.00H3.90ZM6.30,0.00H8.70L7.50,2.50H8.10L8.70,3.50V5.00L8.10,6.00H6.90L6.30,5.00" stroke="#00ff00" fill="none" stroke-width="1.6"/>
<path d="M478,237 L485,244 L490.5,237" stroke="#ffffff" fill="none"/>
<line x1="484.5" y1="245" x2="484.5" y2="255" stroke="#ffffff"/>
<path d="M484,241 L502,251 L494.5,255.5" stroke="#00ff00" fill="none"/>
<line x1="494.5" y1="249" x2="494.5" y2="257" stroke="#00ff00"/>
<path transform="translate(486,257) rotate(-90)" d="M0.27,0.00H2.40L1.33,2.71H1.87L2.40,3.79V5.42L1.87,6.50H0.80L0.27,5.42M3.47,5.63H4.53V6.50H3.47ZM5.60,1.08L6.13,0.00H7.20L7.73,1.08V2.17L5.60,6.50H7.73" stroke="#00ff00" fill="none" stroke-width="1.6"/>
<path d="M491.5,306.5 L473.5,296.5 L481.5,291" stroke="#00ff00" fill="none"/>
<line x1="481.5" y1="291" x2="481.5" y2="301" stroke="#00ff00"/>
<path transform="translate(483,300) rotate(-90)" d="M0.27,0.00H2.40L1.33,2.50H1.87L2.40,3.50V5.00L1.87,6.00H0.80L0.27,5.00M3.47,5.20H4.53V6.00H3.47ZM5.60,1.00L6.13,0.00H7.20L7.73,1.00V2.00L5.60,6.00H7.73" stroke="#00ff00" fill="none" stroke-width="1.6"/>
<rect x="476.5" y="339.5" width="13" height="12" fill="none" stroke="#ffffff"/>
<line x1="482.5" y1="339" x2="482.5" y2="352" stroke="#ffffff"/>
<line x1="476" y1="345.5" x2="490" y2="345.5" stroke="#ffffff"/>
<line x1="482.5" y1="280" x2="482.5" y2="340" stroke="#ffffff"/>
<path d="M482.5,265.5 L477.5,280.5 L488.5,280.5 Z" stroke="#ffffff" fill="none"/>
<line x1="481.5" y1="268" x2="480" y2="280" stroke="#aaaaaa"/>
<line x1="483.5" y1="268" x2="485" y2="280" stroke="#aaaaaa"/>
<line x1="489" y1="345.5" x2="548" y2="345.5" stroke="#ffffff"/>
<path d="M547.5,339.5 L563,345.5 L547.5,351.5 Z" stroke="#ffffff" fill="none"/>
<line x1="550" y1="343.5" x2="562" y2="345.5" stroke="#aaaaaa"/>
<line x1="550" y1="347.5" x2="562" y2="345.5" stroke="#aaaaaa"/>
<line x1="577" y1="338" x2="589" y2="354" stroke="#ffffff"/>
<line x1="589" y1="338" x2="577" y2="354" stroke="#ffffff"/>
<line x1="842.5" y1="28" x2="842.5" y2="195" stroke="#ffffff"/>
<line x1="842" y1="194.5" x2="939" y2="194.5" stroke="#ffffff"/>
<line x1="842" y1="28.5" x2="939" y2="28.5" stroke="#ffffff"/>
<line x1="842" y1="36.5" x2="939" y2="36.5" stroke="#ffffff"/>
<line x1="842" y1="44.5" x2="939" y2="44.5" stroke="#ffffff"/>
<line x1="842" y1="52.5" x2="939" y2="52.5" stroke="#ffffff"/>
<line x1="842" y1="60.5" x2="939" y2="60.5" stroke="#ffffff"/>
<line x1="842" y1="68.5" x2="939" y2="68.5" stroke="#ffffff"/>
<line x1="842" y1="76.5" x2="939" y2="76.5" stroke="#ffffff"/>
<line x1="842" y1="84.5" x2="939" y2="84.5" stroke="#ffffff"/>
<line x1="842" y1="92.5" x2="939" y2="92.5" stroke="#ffffff"/>
<line x1="842" y1="100.5" x2="939" y2="100.5" stroke="#ffffff"/>
<line x1="842" y1="107.5" x2="939" y2="107.5" stroke="#ffffff"/>
<line x1="842" y1="115.5" x2="939" y2="115.5" stroke="#ffffff"/>
<line x1="842" y1="123.5" x2="939" y2="123.5" stroke="#ffffff"/>
<line x1="842" y1="131.5" x2="939" y2="131.5" stroke="#ffffff"/>
<line x1="842" y1="139.5" x2="939" y2="139.5" stroke="#ffffff"/>
<line x1="842" y1="147.5" x2="939" y2="147.5" stroke="#ffffff"/>
<line x1="842" y1="155.5" x2="939" y2="155.5" stroke="#ffffff"/>
<line x1="842" y1="163.5" x2="939" y2="163.5" stroke="#ffffff"/>
<line x1="842" y1="171.5" x2="939" y2="171.5" stroke="#ffffff"/>
<line x1="842" y1="179.5" x2="939" y2="179.5" stroke="#ffffff"/>
<line x1="842" y1="187.5" x2="939" y2="187.5" stroke="#ffffff"/>
<line x1="890.5" y1="36" x2="890.5" y2="45" stroke="#ffffff"/>
<line x1="906.5" y1="36" x2="906.5" y2="45" stroke="#ffffff"/>
<line x1="890.5" y1="44" x2="890.5" y2="53" stroke="#ffffff"/>
<line x1="906.5" y1="44" x2="906.5" y2="53" stroke="#ffffff"/>
<line x1="890.5" y1="52" x2="890.5" y2="61" stroke="#ffffff"/>
<line x1="906.5" y1="52" x2="906.5" y2="61" stroke="#ffffff"/>
<line x1="890.5" y1="60" x2="890.5" y2="69" stroke="#ffffff"/>
<line x1="906.5" y1="60" x2="906.5" y2="69" stroke="#ffffff"/>
<line x1="890.5" y1="68" x2="890.5" y2="77" stroke="#ffffff"/>
<line x1="906.5" y1="68" x2="906.5" y2="77" stroke="#ffffff"/>
<line x1="890.5" y1="76" x2="890.5" y2="85" stroke="#ffffff"/>
<line x1="906.5" y1="76" x2="906.5" y2="85" stroke="#ffffff"/>
<line x1="890.5" y1="92" x2="890.5" y2="101" stroke="#ffffff"/>
<line x1="906.5" y1="92" x2="906.5" y2="101" stroke="#ffffff"/>
<line x1="890.5" y1="100" x2="890.5" y2="108" stroke="#ffffff"/>
<line x1="906.5" y1="100" x2="906.5" y2="108" stroke="#ffffff"/>
<line x1="890.5" y1="115" x2="890.5" y2="124" stroke="#ffffff"/>
<line x1="906.5" y1="115" x2="906.5" y2="124" stroke="#ffffff"/>
<line x1="890.5" y1="139" x2="890.5" y2="148" stroke="#ffffff"/>
<line x1="906.5" y1="139" x2="906.5" y2="148" stroke="#ffffff"/>
<line x1="890.5" y1="147" x2="890.5" y2="156" stroke="#ffffff"/>
<line x1="906.5" y1="147" x2="906.5" y2="156" stroke="#ffffff"/>
<line x1="890.5" y1="155" x2="890.5" y2="164" stroke="#ffffff"/>
<line x1="906.5" y1="155" x2="906.5" y2="164" stroke="#ffffff"/>
<line x1="890.5" y1="163" x2="890.5" y2="172" stroke="#ffffff"/>
<line x1="906.5" y1="163" x2="906.5" y2="172" stroke="#ffffff"/>
<line x1="890.5" y1="171" x2="890.5" y2="180" stroke="#ffffff"/>
<line x1="906.5" y1="171" x2="906.5" y2="180" stroke="#ffffff"/>
<line x1="890.5" y1="84" x2="890.5" y2="93" stroke="#ffffff"/>
<line x1="890.5" y1="107" x2="890.5" y2="116" stroke="#ffffff"/>
<line x1="866.5" y1="123" x2="866.5" y2="140" stroke="#ffffff"/>
<line x1="890.5" y1="123" x2="890.5" y2="140" stroke="#ffffff"/>
<line x1="866.5" y1="179" x2="866.5" y2="195" stroke="#ffffff"/>
<line x1="890.5" y1="179" x2="890.5" y2="195" stroke="#ffffff"/>
<line x1="906.5" y1="179" x2="906.5" y2="195" stroke="#ffffff"/>
<rect x="843" y="131" width="23" height="1" fill="#000"/>
<rect x="843" y="187" width="23" height="1" fill="#000"/>
<rect x="866" y="30" width="4" height="6" fill="#00ff00"/>
<rect x="874" y="30" width="4" height="6" fill="#00ff00"/>
<rect x="882" y="30" width="4" height="6" fill="#00ff00"/>
<rect x="890" y="30" width="4" height="6" fill="#00ff00"/>
<rect x="898" y="30" width="4" height="6" fill="#00ff00"/>
<rect x="906" y="30" width="4" height="6" fill="#00ff00"/>
<rect x="914" y="30" width="4" height="6" fill="#00ff00"/>
<rect x="859" y="38" width="16" height="6" fill="#00ff00"/>
<path d="M863,39.5h1M869.5,41v1M860.5,39v1M868.5,44v-1M875,39.5h-1M868.5,38v1M862.5,44v-1" stroke="#000" fill="none"/>
<rect x="896" y="40" width="5" height="4" fill="#00ff00"/>
<rect x="921" y="39" width="2" height="5" fill="#00ff00"/>
<rect x="862" y="46" width="8" height="5" fill="#00ff00"/>
<path d="M897,47.5H900M897,49.5H900M898.5,48V50M899.5,48V50M897.5,50.5L898,49" stroke="#00ff00" fill="none"/>
<rect x="919" y="46" width="6" height="5" fill="#00ff00"/>
<rect x="860" y="54" width="12" height="5" fill="#00ff00"/>
<path d="M897,55.5H899M899,57.5H899M899,58.5H899M897.5,56V59M899.5,56V58M897.5,58.5L898,57" stroke="#00ff00" fill="none"/>
<rect x="918" y="54" width="8" height="5" fill="#00ff00"/>
<rect x="856" y="62" width="20" height="5" fill="#00ff00"/>
<path d="M895,61.5H902M896,64.5H900M895,65.5H902M896.5,62V65M899.5,62V67M900.5,63V66M895.5,66.5L898,64" stroke="#00ff00" fill="none"/>
<path d="M921,63.5H923M922,64.5H923M921.5,63V66M922.5,64V65M921.5,65.5L922,64" stroke="#00ff00" fill="none"/>
<rect x="856" y="70" width="20" height="5" fill="#00ff00"/>
<path d="M896,69.5H900M896,72.5H900M896,73.5H900M896.5,70V74M897.5,69V75M899.5,71V74" stroke="#00ff00" fill="none"/>
<rect x="918" y="70" width="8" height="5" fill="#00ff00"/>
<rect x="860" y="78" width="12" height="5" fill="#00ff00"/>
<path d="M899,78.5H898M899,80.5H900M899,82.5H898M897.5,79V83M899.5,77V82" stroke="#00ff00" fill="none"/>
<rect x="913" y="78" width="19" height="5" fill="#00ff00"/>
<rect x="862" y="86" width="8" height="5" fill="#00ff00"/>
<rect x="910" y="86" width="8" height="5" fill="#00ff00"/>
<path d="M911,87.5h1M915.5,87v1M911.5,86v1M916.5,91v-1" stroke="#000" fill="none"/>
<rect x="855" y="94" width="24" height="5" fill="#00ff00"/>
<path d="M876,95.5h3M867.5,96v1M859.5,95v1M870.5,96v1M855,94.5h1M858.5,99v-1M855,96.5h1M879,95.5h-1M861.5,94v1M855,95.5h1" stroke="#000" fill="none"/>
<path d="M897,95.5H899M898,97.5H900M897.5,95V99M898.5,95V98" stroke="#00ff00" fill="none"/>
<rect x="921" y="94" width="2" height="5" fill="#00ff00"/>
<rect x="860" y="101" width="13" height="6" fill="#00ff00"/>
<path d="M864,103.5h3M868.5,103v1M872.5,101v1M860,104.5h1M860,102.5h1" stroke="#000" fill="none"/>
<path d="M898,103.5H899M897,104.5H900M897.5,102V105M898.5,102V105" stroke="#00ff00" fill="none"/>
<rect x="919" y="101" width="7" height="5" fill="#00ff00"/>
<path d="M920,103.5h1M923.5,102v1M922.5,106v-1M919,101.5h1" stroke="#000" fill="none"/>
<rect x="859" y="110" width="16" height="5" fill="#00ff00"/>
<path d="M866,113.5h4M866.5,111v1M862.5,111v1M873.5,115v-1M874.5,115v-1M859,111.5h1M859.5,115v-1" stroke="#000" fill="none"/>
<rect x="899" y="110" width="33" height="5" fill="#00ff00"/>
<path d="M925,111.5h2M916.5,111v1M927.5,111v1M900.5,112v1M909.5,111v1M899,114.5h1M932,111.5h-1M921.5,110v1M932,114.5h-1M932,114.5h-1M908.5,115v-1M927.5,110v1M899.5,115v-1" stroke="#000" fill="none"/>
<rect x="844" y="117" width="45" height="6" fill="#00ff00"/>
<path d="M856,119.5h3M875.5,120v1M880.5,118v1M878.5,120v1M851.5,120v1M860.5,118v1M850.5,117v1M889,121.5h-1M848.5,117v1M889,119.5h-1M888.5,123v-1M844,120.5h1M889,121.5h-1M888.5,123v-1M844,121.5h1M872.5,123v-1M870.5,123v-1" stroke="#000" fill="none"/>
<rect x="892" y="117" width="13" height="6" fill="#00ff00"/>
<path d="M899,118.5h2M898.5,118v1M905,117.5h-1M902.5,123v-1M892,117.5h1" stroke="#000" fill="none"/>
<rect x="909" y="117" width="28" height="6" fill="#00ff00"/>
<path d="M932,119.5h6M931.5,119v1M918.5,118v1M917.5,120v1M937,120.5h-1M930.5,123v-1M914.5,123v-1M937,121.5h-1M937,119.5h-1M937,118.5h-1M909,119.5h1" stroke="#000" fill="none"/>
<rect x="847" y="129" width="16" height="6" fill="#00ff00"/>
<path d="M859,130.5h3M848.5,131v1M855.5,132v1M863,131.5h-1M847,133.5h1M850.5,129v1M850.5,135v-1" stroke="#000" fill="none"/>
<rect x="875" y="125" width="7" height="5" fill="#00ff00"/>
<path d="M878,126.5h1M876.5,126v1M881.5,130v-1M882,127.5h-1" stroke="#000" fill="none"/>
<rect x="874" y="133" width="9" height="5" fill="#00ff00"/>
<path d="M876,135.5h2M880.5,135v1M874,133.5h1M880.5,138v-1" stroke="#000" fill="none"/>
<rect x="912" y="133" width="4" height="5" fill="#00ff00"/>
<rect x="851" y="141" width="32" height="6" fill="#00ff00"/>
<path d="M860,142.5h1M872.5,142v1M854.5,144v1M854.5,143v1M866.5,142v1M883,143.5h-1M853.5,147v-1M858.5,147v-1M867.5,147v-1M862.5,141v1M870.5,147v-1M851,145.5h1M869.5,147v-1" stroke="#000" fill="none"/>
<path d="M896,142.5H901M896,143.5H901M898,144.5H901M898,146.5H901M897.5,142V147M899.5,141V146M896.5,146.5L898,144" stroke="#00ff00" fill="none"/>
<rect x="917" y="142" width="11" height="4" fill="#00ff00"/>
<rect x="849" y="149" width="35" height="6" fill="#00ff00"/>
<path d="M875,151.5h6M853.5,150v1M854.5,152v1M877.5,150v1M855.5,152v1M849,153.5h1M867.5,155v-1M878.5,149v1M859.5,155v-1M849,152.5h1M865.5,149v1M849,151.5h1M849,150.5h1" stroke="#000" fill="none"/>
<path d="M896,149.5H900M896,151.5H901M897,152.5H899M896.5,149V154M898.5,149V153M900.5,149V154M896.5,153.5L898,151" stroke="#00ff00" fill="none"/>
<rect x="917" y="150" width="11" height="4" fill="#00ff00"/>
<rect x="858" y="157" width="16" height="5" fill="#00ff00"/>
<path d="M896,157.5H901M896,160.5H899M897,161.5H899M896.5,157V163M898.5,159V163" stroke="#00ff00" fill="none"/>
<rect x="917" y="157" width="10" height="5" fill="#00ff00"/>
<rect x="854" y="165" width="24" height="5" fill="#00ff00"/>
<path d="M896,165.5H900M896,167.5H899M898,170.5H901M896.5,167V170M899.5,165V169M900.5,165V171" stroke="#00ff00" fill="none"/>
<rect x="915" y="165" width="14" height="5" fill="#00ff00"/>
<rect x="858" y="173" width="16" height="5" fill="#00ff00"/>
<path d="M896,173.5H901M898,175.5H899M898,176.5H901M898,177.5H900M896.5,173V179M899.5,174V178M900.5,174V179M896.5,178.5L898,176" stroke="#00ff00" fill="none"/>
<rect x="917" y="173" width="10" height="5" fill="#00ff00"/>
<rect x="848" y="185" width="12" height="5" fill="#00ff00"/>
<rect x="868" y="181" width="20" height="5" fill="#00ff00"/>
<path d="M897,181.5H900M898,183.5H899M898,184.5H901M896,185.5H900M896.5,181V185M898.5,182V185M899.5,181V187M896.5,186.5L898,184" stroke="#00ff00" fill="none"/>
<rect x="912" y="181" width="19" height="5" fill="#00ff00"/>
<rect x="870" y="189" width="16" height="5" fill="#00ff00"/>
<path d="M897,189.5H899M896,191.5H899M896,193.5H899M896.5,190V193M898.5,189V194M896.5,193.5L898,191" stroke="#00ff00" fill="none"/>
<rect x="920" y="189" width="4" height="5" fill="#00ff00"/>
<path d="M793,51.5H802M795.5,48V59M799.5,48V59M795,54.5H799M795,57H799M792,59.5H803M796,60L792,64M799,60L802.5,64" stroke="#00ff00" fill="none" stroke-width="1.5"/>
<path d="M808,48L803,56M808,48L813,55M805,56.5H811M803,58.5H813M808.5,56V64M806,60L803,63M811,60L813,63" stroke="#00ff00" fill="none" stroke-width="1.5"/>
<rect x="816" y="45" width="5" height="7" fill="#00ff00"/>
<path d="M813,52.5H823M813.5,52.5L818.5,60.5L828.5,43" stroke="#00ff00" fill="none"/>
<line x1="652" y1="573.5" x2="780" y2="573.5" stroke="#ffffff"/>
<line x1="652" y1="584.5" x2="780" y2="584.5" stroke="#ffffff"/>
<line x1="652" y1="596.5" x2="780" y2="596.5" stroke="#ffffff"/>
<line x1="652" y1="607.5" x2="780" y2="607.5" stroke="#ffffff"/>
<line x1="652" y1="618.5" x2="780" y2="618.5" stroke="#ffffff"/>
<line x1="652" y1="629.5" x2="780" y2="629.5" stroke="#ffffff"/>
<line x1="652" y1="640.5" x2="780" y2="640.5" stroke="#ffffff"/>
<line x1="652" y1="651.5" x2="780" y2="651.5" stroke="#ffffff"/>
<line x1="652.5" y1="573" x2="652.5" y2="663" stroke="#ffffff"/>
<line x1="668.5" y1="573" x2="668.5" y2="619" stroke="#ffffff"/>
<line x1="684.5" y1="573" x2="684.5" y2="619" stroke="#ffffff"/>
<line x1="709.5" y1="573" x2="709.5" y2="619" stroke="#ffffff"/>
<line x1="735.5" y1="573" x2="735.5" y2="619" stroke="#ffffff"/>
<line x1="754.5" y1="573" x2="754.5" y2="619" stroke="#ffffff"/>
<line x1="671.5" y1="618" x2="671.5" y2="663" stroke="#ffffff"/>
<line x1="690.5" y1="618" x2="690.5" y2="663" stroke="#ffffff"/>
<line x1="716.5" y1="618" x2="716.5" y2="663" stroke="#ffffff"/>
<line x1="735.5" y1="618" x2="735.5" y2="663" stroke="#ffffff"/>
<line x1="754.5" y1="618" x2="754.5" y2="663" stroke="#ffffff"/>
<line x1="779.5" y1="573" x2="779.5" y2="663" stroke="#ffffff"/>
<line x1="779" y1="573.5" x2="939" y2="573.5" stroke="#ffffff"/>
<line x1="858.5" y1="573" x2="858.5" y2="663" stroke="#ffffff"/>
<line x1="779" y1="618.5" x2="859" y2="618.5" stroke="#ffffff"/>
<line x1="779" y1="634.5" x2="859" y2="634.5" stroke="#ffffff"/>
<line x1="779" y1="648.5" x2="859" y2="648.5" stroke="#ffffff"/>
<line x1="820.5" y1="618" x2="820.5" y2="649" stroke="#ffffff"/>
<line x1="839.5" y1="618" x2="839.5" y2="649" stroke="#ffffff"/>
<line x1="789.5" y1="634" x2="789.5" y2="649" stroke="#ffffff"/>
<line x1="800.5" y1="634" x2="800.5" y2="649" stroke="#ffffff"/>
<line x1="810.5" y1="634" x2="810.5" y2="649" stroke="#ffffff"/>
<line x1="858" y1="600.5" x2="939" y2="600.5" stroke="#ffffff"/>
<line x1="858" y1="629.5" x2="939" y2="629.5" stroke="#ffffff"/>
<line x1="858" y1="648.5" x2="939" y2="648.5" stroke="#ffffff"/>
<rect x="655" y="609" width="5" height="8" fill="#00ff00"/>
<path d="M657,613.5h1M657.5,611v2M655,615.5h1M655,610.5h1" stroke="#000" fill="none"/>
<rect x="660" y="609" width="5" height="8" fill="#00ff00"/>
<path d="M661,612.5h1M662.5,613v1M660.5,617v-1M660,613.5h1" stroke="#000" fill="none"/>
<rect x="671" y="609" width="5" height="8" fill="#00ff00"/>
<path d="M672,612.5h1M673.5,614v1M671,615.5h1M671,609.5h1" stroke="#000" fill="none"/>
<rect x="676" y="609" width="5" height="8" fill="#00ff00"/>
<path d="M677,612.5h1M679.5,612v1M678.5,617v-1M681,614.5h-1" stroke="#000" fill="none"/>
<rect x="691" y="609" width="5" height="8" fill="#00ff00"/>
<path d="M693,611.5h1M692.5,613v1M691.5,609v1M696,616.5h-1" stroke="#000" fill="none"/>
<rect x="696" y="609" width="5" height="8" fill="#00ff00"/>
<path d="M697,614.5h1M698.5,610v1M699.5,617v-1M701,614.5h-1" stroke="#000" fill="none"/>
<rect x="710" y="609" width="4" height="8" fill="#00ff00"/>
<rect x="715" y="609" width="4" height="8" fill="#00ff00"/>
<rect x="720" y="609" width="4" height="8" fill="#00ff00"/>
<rect x="725" y="609" width="4" height="8" fill="#00ff00"/>
<rect x="730" y="609" width="4" height="8" fill="#00ff00"/>
<rect x="739" y="609" width="5" height="8" fill="#00ff00"/>
<path d="M741,612.5h1M742.5,612v2M741.5,617v-1M744,615.5h-1" stroke="#000" fill="none"/>
<rect x="744" y="609" width="5" height="8" fill="#00ff00"/>
<path d="M745,610.5h1M745.5,611v2M747.5,617v-1M744,616.5h1" stroke="#000" fill="none"/>
<path d="M755,610.5H760M755,611.5H760M755,612.5H760M756,616.5H761M755.5,611V615M759.5,609V615M755.5,616.5L758,613" stroke="#00ff00" fill="none"/>
<rect x="763" y="615" width="1" height="2" fill="#00ff00"/>
<path d="M765,609.5H770M765,612.5H769M767,613.5H769M767,615.5H770M765.5,611V617M767.5,609V615M769.5,611V615M765.5,616.5L768,613" stroke="#00ff00" fill="none"/>
<rect x="773" y="615" width="1" height="2" fill="#00ff00"/>
<path d="M776,609.5H779M774,611.5H779M774,612.5H779M774,616.5H778M774.5,609V617M777.5,609V616M774.5,616.5L776,613" stroke="#00ff00" fill="none"/>
<rect x="656" y="621" width="5" height="7" fill="#00ff00"/>
<path d="M657,626.5h1M658.5,623v1M660.5,621v1M656,624.5h1" stroke="#000" fill="none"/>
<rect x="662" y="621" width="5" height="7" fill="#00ff00"/>
<path d="M664,624.5h1M664.5,623v1M665.5,621v1M662,621.5h1" stroke="#000" fill="none"/>
<rect x="673" y="621" width="5" height="7" fill="#00ff00"/>
<path d="M674,622.5h1M676.5,625v1M673,622.5h1M678,623.5h-1" stroke="#000" fill="none"/>
<rect x="679" y="621" width="5" height="7" fill="#00ff00"/>
<path d="M681,623.5h1M682.5,624v1M679,626.5h1M684,622.5h-1" stroke="#000" fill="none"/>
<rect x="684" y="621" width="5" height="7" fill="#00ff00"/>
<path d="M686,622.5h1M685.5,625v1M684,627.5h1M685.5,628v-1" stroke="#000" fill="none"/>
<rect x="717" y="621" width="5" height="7" fill="#00ff00"/>
<path d="M718,625.5h1M719.5,622v1M718.5,628v-1M722,624.5h-1" stroke="#000" fill="none"/>
<rect x="723" y="621" width="5" height="7" fill="#00ff00"/>
<path d="M724,622.5h1M724.5,623v1M726.5,628v-1M723.5,621v1" stroke="#000" fill="none"/>
<rect x="728" y="621" width="5" height="7" fill="#00ff00"/>
<path d="M730,623.5h1M731.5,624v1M729.5,621v1M728,622.5h1" stroke="#000" fill="none"/>
<rect x="657" y="643" width="4" height="7" fill="#00ff00"/>
<rect x="662" y="643" width="4" height="7" fill="#00ff00"/>
<rect x="673" y="643" width="5" height="7" fill="#00ff00"/>
<path d="M675,645.5h1M675.5,647v1M673,646.5h1M673.5,650v-1" stroke="#000" fill="none"/>
<rect x="679" y="643" width="5" height="7" fill="#00ff00"/>
<path d="M680,644.5h1M680.5,646v1M683.5,643v1M682.5,650v-1" stroke="#000" fill="none"/>
<rect x="684" y="643" width="5" height="7" fill="#00ff00"/>
<path d="M686,646.5h1M685.5,644v1M686.5,650v-1M689,644.5h-1" stroke="#000" fill="none"/>
<rect x="657" y="654" width="5" height="8" fill="#00ff00"/>
<path d="M659,657.5h1M658.5,658v1M662,654.5h-1M662,654.5h-1" stroke="#000" fill="none"/>
<rect x="662" y="654" width="5" height="8" fill="#00ff00"/>
<path d="M663,658.5h1M664.5,656v1M662,659.5h1M662,659.5h1" stroke="#000" fill="none"/>
<rect x="673" y="654" width="5" height="8" fill="#00ff00"/>
<path d="M674,659.5h1M676.5,657v2M673,654.5h1M673.5,654v1" stroke="#000" fill="none"/>
<rect x="679" y="654" width="5" height="8" fill="#00ff00"/>
<path d="M680,656.5h1M682.5,658v2M679,660.5h1M684,656.5h-1" stroke="#000" fill="none"/>
<rect x="684" y="654" width="5" height="8" fill="#00ff00"/>
<path d="M685,658.5h1M687.5,657v1M686.5,662v-1M684,661.5h1" stroke="#000" fill="none"/>
<rect x="720" y="654" width="5" height="8" fill="#00ff00"/>
<path d="M721,657.5h1M722.5,656v1M725,655.5h-1M723.5,654v1" stroke="#000" fill="none"/>
<rect x="726" y="654" width="5" height="8" fill="#00ff00"/>
<path d="M728,659.5h1M728.5,655v1M726,655.5h1M726.5,662v-1" stroke="#000" fill="none"/>
<rect x="789" y="622" width="5" height="8" fill="#00ff00"/>
<path d="M791,626.5h1M790.5,624v1M794,629.5h-1M793.5,630v-1" stroke="#000" fill="none"/>
<rect x="794" y="622" width="5" height="8" fill="#00ff00"/>
<path d="M795,628.5h1M796.5,625v2M794,626.5h1M794,625.5h1" stroke="#000" fill="none"/>
<rect x="800" y="622" width="5" height="8" fill="#00ff00"/>
<path d="M801,626.5h1M801.5,624v1M800,625.5h1M800,623.5h1" stroke="#000" fill="none"/>
<rect x="806" y="622" width="5" height="8" fill="#00ff00"/>
<path d="M808,626.5h1M809.5,627v1M809.5,622v1M806.5,622v1" stroke="#000" fill="none"/>
<rect x="824" y="622" width="6" height="8" fill="#00ff00"/>
<path d="M826,623.5h1M828.5,625v1M824,625.5h1M824.5,622v1" stroke="#000" fill="none"/>
<rect x="831" y="622" width="6" height="8" fill="#00ff00"/>
<path d="M834,624.5h1M832.5,625v1M837,626.5h-1M831.5,622v1" stroke="#000" fill="none"/>
<rect x="843" y="622" width="5" height="8" fill="#00ff00"/>
<path d="M845,628.5h1M844.5,625v2M843.5,630v-1M845.5,630v-1" stroke="#000" fill="none"/>
<rect x="849" y="622" width="5" height="8" fill="#00ff00"/>
<path d="M850,623.5h1M851.5,626v2M853.5,630v-1M849,623.5h1" stroke="#000" fill="none"/>
<path transform="translate(815,593)" d="M2.98,7.50V0.00L0.42,5.00H3.83M8.07,0.00H4.67V3.75H7.22L8.07,5.00V6.25L7.22,7.50H4.67" stroke="#00ff00" fill="none" stroke-width="1.3"/>
<path transform="translate(879.5,637)" d="M3.73,1.50L2.90,0.00H1.24L0.41,1.50V3.00L1.24,4.50H2.90L3.73,6.00V7.50L2.90,9.00H1.24L0.41,7.50M7.87,0.00V7.50L7.04,9.00H5.39L4.56,7.50M8.70,0.00H12.01M10.36,0.00V9.00M12.84,0.00H16.16L12.84,9.00H16.16M16.99,4.50H20.30M21.96,0.00H23.61L24.44,1.50V7.50L23.61,9.00H21.96L21.13,7.50V1.50ZM25.69,2.25L27.34,0.00V9.00M26.10,9.00H28.59" stroke="#00ff00" fill="none" stroke-width="1.6"/>
<path transform="translate(844.5,639)" d="M0.60,1.50L1.80,0.00V6.00M0.90,6.00H2.70M3.90,5.20H5.10V6.00H3.90ZM6.60,1.50L7.80,0.00V6.00M6.90,6.00H8.70" stroke="#00ff00" fill="none" stroke-width="1.2"/>
<rect x="784" y="652" width="5" height="8" fill="#00ff00"/>
<path d="M785,654.5h1M787.5,656v1M789,653.5h-1M789,654.5h-1" stroke="#000" fill="none"/>
<rect x="806" y="652" width="5" height="8" fill="#00ff00"/>
<path d="M807,658.5h1M808.5,655v2M806,656.5h1M811,652.5h-1" stroke="#000" fill="none"/>
<rect x="825" y="652" width="5" height="8" fill="#00ff00"/>
<path d="M827,655.5h1M827.5,653v2M828.5,660v-1M830,655.5h-1" stroke="#000" fill="none"/>
<rect x="848" y="652" width="5" height="8" fill="#00ff00"/>
<path d="M850,653.5h1M850.5,653v1M853,657.5h-1M853,654.5h-1" stroke="#000" fill="none"/>
<path transform="translate(796,652)" d="M0.80,2.00L2.40,0.00V8.00M1.20,8.00H3.60" stroke="#00ff00" fill="none" stroke-width="1.1"/>
<path transform="translate(838,652)" d="M0.80,2.00L2.40,0.00V8.00M1.20,8.00H3.60" stroke="#00ff00" fill="none" stroke-width="1.1"/>
<path transform="translate(876,582)" d="M3,1.5H7.5L5.5,4.5V9.5L4.5,9M1,1L2,2M0,4.5H2.5V8.5L0.5,10.5M1.5,9.5L3,11H8" stroke="#00ff00" fill="none" stroke-width="1.3"/>
<path transform="translate(884,582)" d="M4,0V1.5M0.5,4V2.5H7.5V4M0,6.5H8M4.5,6.5V11L3.5,10.5" stroke="#00ff00" fill="none" stroke-width="1.3"/>
<path transform="translate(892,582)" d="M1,1.5H7M4.5,1.5V10M0,10.5H8" stroke="#00ff00" fill="none" stroke-width="1.3"/>
<path transform="translate(900,582)" d="M2.5,1V10M5.5,1V10M0.5,4L1.5,8M7.5,4L6.5,8M0,10.5H8" stroke="#00ff00" fill="none" stroke-width="1.3"/>
<path transform="translate(908,582)" d="M0,3.5H8M4.5,0V5M4,5L0.5,11M4.5,5.5L8,11" stroke="#00ff00" fill="none" stroke-width="1.3"/>
<path transform="translate(916,582)" d="M2,0L3,1M4.5,0V1M6.5,0L6,1M0.5,4V2.5H7.5V4M2,4.5H6.5L4.5,6.5M4.5,6.5V11L3.5,10.5M0,7.5H8" stroke="#00ff00" fill="none" stroke-width="1.3"/>
<path transform="translate(884,611)" d="M0.5,0.5H7.5V11H0.5ZM2.5,2.5H5.5V4H2.5ZM2.5,5.5H5.5V8.5H2.5ZM3,8.5L2,10M5,8.5L6,10" stroke="#00ff00" fill="none" stroke-width="1.4"/>
<path transform="translate(892,611)" d="M0,3.5H3.5M1.5,0V11M1.5,4L0,8M2,5L3,7M5.5,0L6,1M4,2.5H8M4,6H8M4,10.5H8M6,2.5V10.5" stroke="#00ff00" fill="none" stroke-width="1.4"/>
<path transform="translate(900,611)" d="M4.5,0V4M4.5,2H7.5M1,1V4M0,4.5H8M0.5,5V11H7.5V5M4,6L2,10M4,6L6,10" stroke="#00ff00" fill="none" stroke-width="1.4"/>
<path transform="translate(908,611)" d="M0,2.5H3.5M0,6.5H3.5M2,0V11M0,2.5L1,5.5M6,0L4,3M6,0L8,3M4.5,5H7.5V7M5,5V10.5H8" stroke="#00ff00" fill="none" stroke-width="1.4"/>
<path transform="translate(646,479)" d="M0,3.5H3.5M1.5,0V10L0.5,9M0,7.5L3,5.5M4,2.5H8M6.5,0V5M4,5.5H8M4,6.5L8,11M8,6.5L4,11" stroke="#00ff00" fill="none" stroke-width="1.7"/>
<path transform="translate(655,479)" d="M0,3.5H8M4.5,0V11M4,4L0,9M5,4L8.5,9M6,1L7,2" stroke="#00ff00" fill="none" stroke-width="1.7"/>
<path transform="translate(664,479)" d="M0,1H8.5M1.5,2.5H7.5V5.5H1.5ZM3.5,1V5.5M5.5,1V5.5M0,7.5H8.5M3.5,6L2,9.5L7.5,11M6.5,7.5L1,11" stroke="#00ff00" fill="none" stroke-width="1.7"/>
<path transform="translate(673,479)" d="M0,3.5H8.5M4.5,0V10.5L3.5,10M6,1L7.5,2.5M1,5.5L3,7.5M0,10L4,7M5.5,6L8.5,10.5" stroke="#00ff00" fill="none" stroke-width="1.7"/>
<rect x="621" y="499" width="1" height="6" fill="#00ff00"/>
<rect x="620" y="500" width="1" height="1" fill="#00ff00"/>
<rect x="623" y="504" width="1" height="1" fill="#00ff00"/>
<rect x="626" y="498" width="5" height="7" fill="#00ff00"/>
<path d="M627,500.5h1M629.5,500v1M630.5,498v1M626,503.5h1" stroke="#000" fill="none"/>
<rect x="632" y="498" width="5" height="7" fill="#00ff00"/>
<path d="M633,503.5h1M634.5,501v1M632.5,505v-1M635.5,498v1" stroke="#000" fill="none"/>
<rect x="638" y="498" width="5" height="7" fill="#00ff00"/>
<path d="M639,502.5h1M639.5,499v1M638,498.5h1M643,498.5h-1" stroke="#000" fill="none"/>
<rect x="645" y="498" width="5" height="7" fill="#00ff00"/>
<path d="M646,503.5h1M648.5,502v1M650,499.5h-1M645.5,505v-1" stroke="#000" fill="none"/>
<rect x="651" y="498" width="5" height="7" fill="#00ff00"/>
<path d="M652,502.5h1M653.5,499v1M652.5,505v-1M655.5,498v1" stroke="#000" fill="none"/>
<rect x="657" y="498" width="5" height="7" fill="#00ff00"/>
<path d="M659,499.5h1M659.5,502v1M662,500.5h-1M660.5,505v-1" stroke="#000" fill="none"/>
<rect x="664" y="498" width="5" height="7" fill="#00ff00"/>
<path d="M666,502.5h1M667.5,502v1M664.5,498v1M669,501.5h-1" stroke="#000" fill="none"/>
<rect x="670" y="498" width="5" height="7" fill="#00ff00"/>
<path d="M672,500.5h1M671.5,502v1M670.5,498v1M672.5,505v-1" stroke="#000" fill="none"/>
<path d="M620,510.5H622.5V513.5H620.5V516.5H623" stroke="#00ff00" fill="none"/>
<rect x="624" y="516" width="1" height="1" fill="#00ff00"/>
<rect x="626" y="509" width="5" height="8" fill="#00ff00"/>
<path d="M628,513.5h1M628.5,514v1M627.5,509v1M628.5,509v1" stroke="#000" fill="none"/>
<rect x="632" y="509" width="5" height="8" fill="#00ff00"/>
<path d="M633,515.5h1M635.5,513v1M632.5,509v1M633.5,509v1" stroke="#000" fill="none"/>
<rect x="639" y="509" width="5" height="8" fill="#00ff00"/>
<path d="M641,511.5h1M640.5,511v1M639,513.5h1M641.5,517v-1" stroke="#000" fill="none"/>
<rect x="645" y="509" width="5" height="8" fill="#00ff00"/>
<path d="M647,514.5h1M646.5,512v2M649.5,517v-1M645,512.5h1" stroke="#000" fill="none"/>
<rect x="651" y="509" width="5" height="8" fill="#00ff00"/>
<path d="M653,512.5h1M652.5,511v2M653.5,517v-1M651,515.5h1" stroke="#000" fill="none"/>
<rect x="658" y="509" width="5" height="8" fill="#00ff00"/>
<path d="M660,511.5h1M661.5,510v2M663,510.5h-1M658,515.5h1" stroke="#000" fill="none"/>
<rect x="668" y="513" width="1" height="4" fill="#00ff00"/>
<rect x="673" y="510" width="5" height="7" fill="#00ff00"/>
<path d="M675,513.5h1M675.5,512v1M673,516.5h1M676.5,510v1" stroke="#000" fill="none"/>
<rect x="679" y="510" width="5" height="7" fill="#00ff00"/>
<path d="M680,512.5h1M681.5,513v1M679,515.5h1M679.5,510v1" stroke="#000" fill="none"/>
<rect x="684" y="510" width="5" height="7" fill="#00ff00"/>
<path d="M685,512.5h1M687.5,514v1M684,510.5h1M687.5,517v-1" stroke="#000" fill="none"/>
<rect x="690" y="510" width="5" height="7" fill="#00ff00"/>
<path d="M691,512.5h1M691.5,511v1M690,510.5h1M690,514.5h1" stroke="#000" fill="none"/>
<rect x="695" y="510" width="5" height="7" fill="#00ff00"/>
<path d="M697,512.5h1M698.5,512v1M695,514.5h1M700,511.5h-1" stroke="#000" fill="none"/>
</svg>
</body></html>
